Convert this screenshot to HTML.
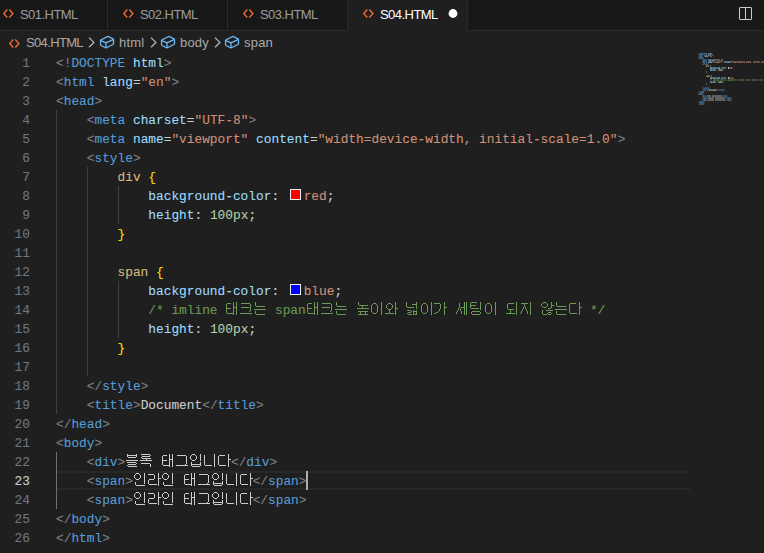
<!DOCTYPE html><html><head><meta charset="utf-8"><style>
*{margin:0;padding:0;box-sizing:border-box}
html,body{width:764px;height:553px;overflow:hidden;background:#1f1f1f}
body{position:relative;font-family:"Liberation Sans",sans-serif}
.tabs{position:absolute;left:0;top:0;width:764px;height:31px;background:#181818;border-bottom:1px solid #2b2b2b}
.tab{position:absolute;top:0;height:30px;width:120px;border-right:1px solid #2b2b2b;color:#9d9d9d;font-size:13px;letter-spacing:-0.55px}
.tab.act{background:#1f1f1f;color:#fff;height:31px}
.tab span{position:absolute;left:32px;top:7px;line-height:16px;white-space:pre}
.tab svg{position:absolute;left:14px;top:7px}
.bc{position:absolute;left:0;top:31px;height:22px;width:764px;color:#a9a9a9;font-size:13px;letter-spacing:-0.4px}
.bc span{position:absolute;top:4px;line-height:16px;white-space:pre}
.bc svg{position:absolute;top:3px}
.ln{position:absolute;left:0;width:30px;padding-top:1px;text-align:right;font-family:"Liberation Mono",monospace;font-size:12.825px;line-height:19px;color:#6e7681;height:19px;-webkit-text-stroke:0.1px currentColor}
.l{position:absolute;left:56px;height:19px;width:640px;font-family:"Liberation Mono",monospace;font-size:12.825px;line-height:19px;white-space:pre;-webkit-text-stroke:0.1px currentColor}
.l span{position:absolute;top:1px}
.l svg.k{position:absolute;top:0}
.g{position:absolute;width:1px;background:#404040}
</style></head><body>
<div class="tabs">
<div class="tab" style="left:-12px">
<svg style="left:15px;top:8.8px" width="14" height="12" viewBox="0 0 14 12"><path d="M4.3 0.6 L0.7 4.55 L4.3 8.5 M6.3 0.6 L9.9 4.55 L6.3 8.5" fill="none" stroke="#e86a2e" stroke-width="1.45"/></svg>
<span style="left:32px">S01.HTML</span>
</div>
<div class="tab" style="left:108px">
<svg style="left:15px;top:8.8px" width="14" height="12" viewBox="0 0 14 12"><path d="M4.3 0.6 L0.7 4.55 L4.3 8.5 M6.3 0.6 L9.9 4.55 L6.3 8.5" fill="none" stroke="#e86a2e" stroke-width="1.45"/></svg>
<span style="left:32px">S02.HTML</span>
</div>
<div class="tab" style="left:228px">
<svg style="left:15px;top:8.8px" width="14" height="12" viewBox="0 0 14 12"><path d="M4.3 0.6 L0.7 4.55 L4.3 8.5 M6.3 0.6 L9.9 4.55 L6.3 8.5" fill="none" stroke="#e86a2e" stroke-width="1.45"/></svg>
<span style="left:32px">S03.HTML</span>
</div>
<div class="tab act" style="left:348px">
<svg style="left:15px;top:8.8px" width="14" height="12" viewBox="0 0 14 12"><path d="M4.3 0.6 L0.7 4.55 L4.3 8.5 M6.3 0.6 L9.9 4.55 L6.3 8.5" fill="none" stroke="#e86a2e" stroke-width="1.45"/></svg>
<span style="left:32px">S04.HTML</span>
<svg style="left:100px;top:8px" width="12" height="12" viewBox="0 0 12 12"><circle cx="5" cy="5.5" r="4.4" fill="#ffffff"/></svg>
</div>
<svg style="position:absolute;left:737px;top:6px" width="16" height="16" viewBox="0 0 16 16"><path fill="#cccccc" d="M14 1H3L2 2v11l1 1h11l1-1V2l-1-1zM8 13H3V2h5v11zm6 0H9V2h5v11z"/></svg>
</div>
<div class="bc">
<svg style="left:9px;top:7.6px" width="14" height="12" viewBox="0 0 14 12"><path d="M4.3 0.6 L0.7 4.55 L4.3 8.5 M6.3 0.6 L9.9 4.55 L6.3 8.5" fill="none" stroke="#e86a2e" stroke-width="1.45"/></svg>
<span style="left:26px;letter-spacing:-0.65px">S04.HTML</span>
<svg style="left:83.2px;top:2.75px" width="16" height="16" viewBox="0 0 16 16"><path fill="none" stroke="#b8b8b8" stroke-width="1.25" d="M6 3.6 L10.9 8.4 L6 13.2"/></svg>
<svg style="left:99.3px;top:3.3px" width="16" height="16" viewBox="0 0 16 16"><path fill="#75beff" stroke="#75beff" stroke-width="0.25" d="M14.45 4.5l-5-2.5h-.9l-7 3.5-.55.89v4.5l.55.9 5 2.5h.9l7-3.5.55-.9v-4.5l-.55-.89zm-8 8.64l-4.5-2.25V7.17l4.5 2v3.97zm.5-4.8L2.29 6.23l6.66-3.34 4.67 2.34-6.67 3.11zm7 1.55l-6.5 3.25V9.21l6.5-3v3.68z"/></svg>
<span style="left:119px;letter-spacing:0.2px;font-size:13px;top:4px">html</span>
<svg style="left:144.5px;top:2.75px" width="16" height="16" viewBox="0 0 16 16"><path fill="none" stroke="#b8b8b8" stroke-width="1.25" d="M6 3.6 L10.9 8.4 L6 13.2"/></svg>
<svg style="left:160px;top:3.3px" width="16" height="16" viewBox="0 0 16 16"><path fill="#75beff" stroke="#75beff" stroke-width="0.25" d="M14.45 4.5l-5-2.5h-.9l-7 3.5-.55.89v4.5l.55.9 5 2.5h.9l7-3.5.55-.9v-4.5l-.55-.89zm-8 8.64l-4.5-2.25V7.17l4.5 2v3.97zm.5-4.8L2.29 6.23l6.66-3.34 4.67 2.34-6.67 3.11zm7 1.55l-6.5 3.25V9.21l6.5-3v3.68z"/></svg>
<span style="left:180px;letter-spacing:0.2px;font-size:13px;top:4px">body</span>
<svg style="left:209px;top:2.75px" width="16" height="16" viewBox="0 0 16 16"><path fill="none" stroke="#b8b8b8" stroke-width="1.25" d="M6 3.6 L10.9 8.4 L6 13.2"/></svg>
<svg style="left:224.3px;top:3.3px" width="16" height="16" viewBox="0 0 16 16"><path fill="#75beff" stroke="#75beff" stroke-width="0.25" d="M14.45 4.5l-5-2.5h-.9l-7 3.5-.55.89v4.5l.55.9 5 2.5h.9l7-3.5.55-.9v-4.5l-.55-.89zm-8 8.64l-4.5-2.25V7.17l4.5 2v3.97zm.5-4.8L2.29 6.23l6.66-3.34 4.67 2.34-6.67 3.11zm7 1.55l-6.5 3.25V9.21l6.5-3v3.68z"/></svg>
<span style="left:244px;letter-spacing:0.2px;font-size:13px;top:4px">span</span>
</div>
<div class="g" style="left:56px;top:110px;height:304px;background:#404040"></div>
<div class="g" style="left:87px;top:167px;height:209px;background:#404040"></div>
<div class="g" style="left:118px;top:186px;height:38px;background:#404040"></div>
<div class="g" style="left:118px;top:281px;height:57px;background:#404040"></div>
<div class="g" style="left:56px;top:452px;height:57px;background:#707070"></div>
<div style="position:absolute;left:57px;top:471px;width:633px;height:19px;border-top:2px solid #282828;border-bottom:2px solid #282828"></div>
<div class="ln" style="top:53px;color:#6e7681">1</div>
<div class="l" style="top:53px"><span style="left:0.000px;color:#808080">&lt;!</span><span style="left:15.390px;color:#569cd6">DOCTYPE</span><span style="left:76.950px;color:#9cdcfe">html</span><span style="left:107.730px;color:#808080">&gt;</span></div>
<div class="ln" style="top:72px;color:#6e7681">2</div>
<div class="l" style="top:72px"><span style="left:0.000px;color:#808080">&lt;</span><span style="left:7.695px;color:#569cd6">html</span><span style="left:46.170px;color:#9cdcfe">lang</span><span style="left:76.950px;color:#cccccc">=</span><span style="left:84.645px;color:#ce9178">&quot;en&quot;</span><span style="left:115.425px;color:#808080">&gt;</span></div>
<div class="ln" style="top:91px;color:#6e7681">3</div>
<div class="l" style="top:91px"><span style="left:0.000px;color:#808080">&lt;</span><span style="left:7.695px;color:#569cd6">head</span><span style="left:38.475px;color:#808080">&gt;</span></div>
<div class="ln" style="top:110px;color:#6e7681">4</div>
<div class="l" style="top:110px"><span style="left:30.780px;color:#808080">&lt;</span><span style="left:38.475px;color:#569cd6">meta</span><span style="left:76.950px;color:#9cdcfe">charset</span><span style="left:130.815px;color:#cccccc">=</span><span style="left:138.510px;color:#ce9178">&quot;UTF-8&quot;</span><span style="left:192.375px;color:#808080">&gt;</span></div>
<div class="ln" style="top:129px;color:#6e7681">5</div>
<div class="l" style="top:129px"><span style="left:30.780px;color:#808080">&lt;</span><span style="left:38.475px;color:#569cd6">meta</span><span style="left:76.950px;color:#9cdcfe">name</span><span style="left:107.730px;color:#cccccc">=</span><span style="left:115.425px;color:#ce9178">&quot;viewport&quot;</span><span style="left:200.070px;color:#9cdcfe">content</span><span style="left:253.935px;color:#cccccc">=</span><span style="left:261.630px;color:#ce9178">&quot;width=device-width, initial-scale=1.0&quot;</span><span style="left:561.735px;color:#808080">&gt;</span></div>
<div class="ln" style="top:148px;color:#6e7681">6</div>
<div class="l" style="top:148px"><span style="left:30.780px;color:#808080">&lt;</span><span style="left:38.475px;color:#569cd6">style</span><span style="left:76.950px;color:#808080">&gt;</span></div>
<div class="ln" style="top:167px;color:#6e7681">7</div>
<div class="l" style="top:167px"><span style="left:61.560px;color:#d7ba7d">div</span><span style="left:92.340px;color:#ffd700">{</span></div>
<div class="ln" style="top:186px;color:#6e7681">8</div>
<div class="l" style="top:186px"><span style="left:92.340px;color:#9cdcfe">background-color</span><span style="left:215.460px;color:#cccccc">: </span><div style="position:absolute;left:233.65px;top:3px;width:11.2px;height:11.2px;border:1.4px solid #eeeeee;background:#ff0000"></div><span style="left:247.650px;color:#ce9178">red</span><span style="left:270.735px;color:#cccccc">;</span></div>
<div class="ln" style="top:205px;color:#6e7681">9</div>
<div class="l" style="top:205px"><span style="left:92.340px;color:#9cdcfe">height</span><span style="left:138.510px;color:#cccccc">: </span><span style="left:153.900px;color:#b5cea8">100px</span><span style="left:192.375px;color:#cccccc">;</span></div>
<div class="ln" style="top:224px;color:#6e7681">10</div>
<div class="l" style="top:224px"><span style="left:61.560px;color:#ffd700">}</span></div>
<div class="ln" style="top:243px;color:#6e7681">11</div>
<div class="l" style="top:243px"></div>
<div class="ln" style="top:262px;color:#6e7681">12</div>
<div class="l" style="top:262px"><span style="left:61.560px;color:#d7ba7d">span</span><span style="left:100.035px;color:#ffd700">{</span></div>
<div class="ln" style="top:281px;color:#6e7681">13</div>
<div class="l" style="top:281px"><span style="left:92.340px;color:#9cdcfe">background-color</span><span style="left:215.460px;color:#cccccc">: </span><div style="position:absolute;left:233.65px;top:3px;width:11.2px;height:11.2px;border:1.4px solid #eeeeee;background:#0000ff"></div><span style="left:247.650px;color:#ce9178">blue</span><span style="left:278.430px;color:#cccccc">;</span></div>
<div class="ln" style="top:300px;color:#6e7681">14</div>
<div class="l" style="top:300px"><span style="left:92.340px;color:#6a9955">/* imline </span><span style="left:211.290px;color:#6a9955"> span</span><span style="left:526.240px;color:#6a9955"> */</span></div>
<div class="ln" style="top:319px;color:#6e7681">15</div>
<div class="l" style="top:319px"><span style="left:92.340px;color:#9cdcfe">height</span><span style="left:138.510px;color:#cccccc">: </span><span style="left:153.900px;color:#b5cea8">100px</span><span style="left:192.375px;color:#cccccc">;</span></div>
<div class="ln" style="top:338px;color:#6e7681">16</div>
<div class="l" style="top:338px"><span style="left:61.560px;color:#ffd700">}</span></div>
<div class="ln" style="top:357px;color:#6e7681">17</div>
<div class="l" style="top:357px"></div>
<div class="ln" style="top:376px;color:#6e7681">18</div>
<div class="l" style="top:376px"><span style="left:30.780px;color:#808080">&lt;/</span><span style="left:46.170px;color:#569cd6">style</span><span style="left:84.645px;color:#808080">&gt;</span></div>
<div class="ln" style="top:395px;color:#6e7681">19</div>
<div class="l" style="top:395px"><span style="left:30.780px;color:#808080">&lt;</span><span style="left:38.475px;color:#569cd6">title</span><span style="left:76.950px;color:#808080">&gt;</span><span style="left:84.645px;color:#cccccc">Document</span><span style="left:146.205px;color:#808080">&lt;/</span><span style="left:161.595px;color:#569cd6">title</span><span style="left:200.070px;color:#808080">&gt;</span></div>
<div class="ln" style="top:414px;color:#6e7681">20</div>
<div class="l" style="top:414px"><span style="left:0.000px;color:#808080">&lt;/</span><span style="left:15.390px;color:#569cd6">head</span><span style="left:46.170px;color:#808080">&gt;</span></div>
<div class="ln" style="top:433px;color:#6e7681">21</div>
<div class="l" style="top:433px"><span style="left:0.000px;color:#808080">&lt;</span><span style="left:7.695px;color:#569cd6">body</span><span style="left:38.475px;color:#808080">&gt;</span></div>
<div class="ln" style="top:452px;color:#6e7681">22</div>
<div class="l" style="top:452px"><span style="left:30.780px;color:#808080">&lt;</span><span style="left:38.475px;color:#569cd6">div</span><span style="left:61.560px;color:#808080">&gt;</span><span style="left:174.950px;color:#808080">&lt;/</span><span style="left:190.340px;color:#569cd6">div</span><span style="left:213.425px;color:#808080">&gt;</span></div>
<div class="ln" style="top:471px;color:#cccccc">23</div>
<div class="l" style="top:471px"><span style="left:30.780px;color:#808080">&lt;</span><span style="left:38.475px;color:#569cd6">span</span><span style="left:69.255px;color:#808080">&gt;</span><span style="left:196.645px;color:#808080">&lt;/</span><span style="left:212.035px;color:#569cd6">span</span><span style="left:242.815px;color:#808080">&gt;</span></div>
<div class="ln" style="top:490px;color:#6e7681">24</div>
<div class="l" style="top:490px"><span style="left:30.780px;color:#808080">&lt;</span><span style="left:38.475px;color:#569cd6">span</span><span style="left:69.255px;color:#808080">&gt;</span><span style="left:196.645px;color:#808080">&lt;/</span><span style="left:212.035px;color:#569cd6">span</span><span style="left:242.815px;color:#808080">&gt;</span></div>
<div class="ln" style="top:509px;color:#6e7681">25</div>
<div class="l" style="top:509px"><span style="left:0.000px;color:#808080">&lt;/</span><span style="left:15.390px;color:#569cd6">body</span><span style="left:46.170px;color:#808080">&gt;</span></div>
<div class="ln" style="top:528px;color:#6e7681">26</div>
<div class="l" style="top:528px"><span style="left:0.000px;color:#808080">&lt;/</span><span style="left:15.390px;color:#569cd6">html</span><span style="left:46.170px;color:#808080">&gt;</span></div>
<svg style="position:absolute;left:0;top:0" width="764" height="553"><defs><g id="k19" fill="currentColor"><rect x="7" y="-12" width="1" height="1" fill-opacity="1.00"/><rect x="10" y="-12" width="1" height="1" fill-opacity="1.00"/><rect x="1" y="-11" width="1" height="1" fill-opacity="1.00"/><rect x="2" y="-11" width="1" height="1" fill-opacity="1.00"/><rect x="3" y="-11" width="1" height="1" fill-opacity="1.00"/><rect x="4" y="-11" width="1" height="1" fill-opacity="1.00"/><rect x="7" y="-11" width="1" height="1" fill-opacity="1.00"/><rect x="10" y="-11" width="1" height="1" fill-opacity="1.00"/><rect x="0" y="-10" width="1" height="1" fill-opacity="1.00"/><rect x="7" y="-10" width="1" height="1" fill-opacity="1.00"/><rect x="10" y="-10" width="1" height="1" fill-opacity="1.00"/><rect x="0" y="-9" width="1" height="1" fill-opacity="1.00"/><rect x="7" y="-9" width="1" height="1" fill-opacity="1.00"/><rect x="10" y="-9" width="1" height="1" fill-opacity="1.00"/><rect x="0" y="-8" width="1" height="1" fill-opacity="1.00"/><rect x="7" y="-8" width="1" height="1" fill-opacity="1.00"/><rect x="10" y="-8" width="1" height="1" fill-opacity="1.00"/><rect x="0" y="-7" width="1" height="1" fill-opacity="1.00"/><rect x="7" y="-7" width="1" height="1" fill-opacity="1.00"/><rect x="8" y="-7" width="1" height="1" fill-opacity="1.00"/><rect x="9" y="-7" width="1" height="1" fill-opacity="1.00"/><rect x="10" y="-7" width="1" height="1" fill-opacity="1.00"/><rect x="0" y="-6" width="1" height="1" fill-opacity="1.00"/><rect x="1" y="-6" width="1" height="1" fill-opacity="1.00"/><rect x="2" y="-6" width="1" height="1" fill-opacity="1.00"/><rect x="3" y="-6" width="1" height="1" fill-opacity="1.00"/><rect x="4" y="-6" width="1" height="1" fill-opacity="1.00"/><rect x="7" y="-6" width="1" height="1" fill-opacity="1.00"/><rect x="10" y="-6" width="1" height="1" fill-opacity="1.00"/><rect x="0" y="-5" width="1" height="1" fill-opacity="1.00"/><rect x="7" y="-5" width="1" height="1" fill-opacity="1.00"/><rect x="10" y="-5" width="1" height="1" fill-opacity="1.00"/><rect x="0" y="-4" width="1" height="1" fill-opacity="1.00"/><rect x="7" y="-4" width="1" height="1" fill-opacity="1.00"/><rect x="10" y="-4" width="1" height="1" fill-opacity="1.00"/><rect x="0" y="-3" width="1" height="1" fill-opacity="1.00"/><rect x="7" y="-3" width="1" height="1" fill-opacity="1.00"/><rect x="10" y="-3" width="1" height="1" fill-opacity="1.00"/><rect x="0" y="-2" width="1" height="1" fill-opacity="1.00"/><rect x="7" y="-2" width="1" height="1" fill-opacity="1.00"/><rect x="10" y="-2" width="1" height="1" fill-opacity="1.00"/><rect x="1" y="-1" width="1" height="1" fill-opacity="1.00"/><rect x="2" y="-1" width="1" height="1" fill-opacity="1.00"/><rect x="3" y="-1" width="1" height="1" fill-opacity="1.00"/><rect x="4" y="-1" width="1" height="1" fill-opacity="1.00"/><rect x="5" y="-1" width="1" height="1" fill-opacity="1.00"/><rect x="6" y="-1" width="1" height="1" fill-opacity="1.00"/><rect x="7" y="-1" width="1" height="1" fill-opacity="1.00"/><rect x="10" y="-1" width="1" height="1" fill-opacity="1.00"/><rect x="7" y="0" width="1" height="1" fill-opacity="1.00"/><rect x="10" y="0" width="1" height="1" fill-opacity="1.00"/></g><g id="k18" fill="currentColor"><rect x="1" y="-11" width="1" height="1" fill-opacity="1.00"/><rect x="2" y="-11" width="1" height="1" fill-opacity="1.00"/><rect x="3" y="-11" width="1" height="1" fill-opacity="1.00"/><rect x="4" y="-11" width="1" height="1" fill-opacity="1.00"/><rect x="5" y="-11" width="1" height="1" fill-opacity="1.00"/><rect x="6" y="-11" width="1" height="1" fill-opacity="1.00"/><rect x="7" y="-11" width="1" height="1" fill-opacity="1.00"/><rect x="8" y="-11" width="1" height="1" fill-opacity="1.00"/><rect x="9" y="-11" width="1" height="1" fill-opacity="1.00"/><rect x="10" y="-10" width="1" height="1" fill-opacity="1.00"/><rect x="10" y="-9" width="1" height="1" fill-opacity="1.00"/><rect x="10" y="-8" width="1" height="1" fill-opacity="1.00"/><rect x="1" y="-7" width="1" height="1" fill-opacity="1.00"/><rect x="2" y="-7" width="1" height="1" fill-opacity="1.00"/><rect x="3" y="-7" width="1" height="1" fill-opacity="1.00"/><rect x="4" y="-7" width="1" height="1" fill-opacity="1.00"/><rect x="5" y="-7" width="1" height="1" fill-opacity="1.00"/><rect x="6" y="-7" width="1" height="1" fill-opacity="1.00"/><rect x="7" y="-7" width="1" height="1" fill-opacity="1.00"/><rect x="8" y="-7" width="1" height="1" fill-opacity="1.00"/><rect x="10" y="-7" width="1" height="1" fill-opacity="1.00"/><rect x="10" y="-6" width="1" height="1" fill-opacity="1.00"/><rect x="10" y="-5" width="1" height="1" fill-opacity="1.00"/><rect x="10" y="-4" width="1" height="1" fill-opacity="1.00"/><rect x="9" y="-3" width="1" height="1" fill-opacity="1.00"/><rect x="0" y="-1" width="1" height="1" fill-opacity="1.00"/><rect x="1" y="-1" width="1" height="1" fill-opacity="1.00"/><rect x="2" y="-1" width="1" height="1" fill-opacity="1.00"/><rect x="3" y="-1" width="1" height="1" fill-opacity="1.00"/><rect x="4" y="-1" width="1" height="1" fill-opacity="1.00"/><rect x="5" y="-1" width="1" height="1" fill-opacity="1.00"/><rect x="6" y="-1" width="1" height="1" fill-opacity="1.00"/><rect x="7" y="-1" width="1" height="1" fill-opacity="1.00"/><rect x="8" y="-1" width="1" height="1" fill-opacity="1.00"/><rect x="9" y="-1" width="1" height="1" fill-opacity="1.00"/><rect x="10" y="-1" width="1" height="1" fill-opacity="1.00"/><rect x="11" y="-1" width="1" height="1" fill-opacity="1.00"/></g><g id="k4" fill="currentColor"><rect x="1" y="-12" width="1" height="1" fill-opacity="1.00"/><rect x="1" y="-11" width="1" height="1" fill-opacity="1.00"/><rect x="1" y="-10" width="1" height="1" fill-opacity="1.00"/><rect x="1" y="-9" width="1" height="1" fill-opacity="1.00"/><rect x="2" y="-8" width="1" height="1" fill-opacity="1.00"/><rect x="3" y="-8" width="1" height="1" fill-opacity="1.00"/><rect x="4" y="-8" width="1" height="1" fill-opacity="1.00"/><rect x="5" y="-8" width="1" height="1" fill-opacity="1.00"/><rect x="6" y="-8" width="1" height="1" fill-opacity="1.00"/><rect x="7" y="-8" width="1" height="1" fill-opacity="1.00"/><rect x="8" y="-8" width="1" height="1" fill-opacity="1.00"/><rect x="9" y="-8" width="1" height="1" fill-opacity="1.00"/><rect x="10" y="-8" width="1" height="1" fill-opacity="1.00"/><rect x="0" y="-5" width="1" height="1" fill-opacity="1.00"/><rect x="1" y="-5" width="1" height="1" fill-opacity="1.00"/><rect x="2" y="-5" width="1" height="1" fill-opacity="1.00"/><rect x="3" y="-5" width="1" height="1" fill-opacity="1.00"/><rect x="4" y="-5" width="1" height="1" fill-opacity="1.00"/><rect x="5" y="-5" width="1" height="1" fill-opacity="1.00"/><rect x="6" y="-5" width="1" height="1" fill-opacity="1.00"/><rect x="7" y="-5" width="1" height="1" fill-opacity="1.00"/><rect x="8" y="-5" width="1" height="1" fill-opacity="1.00"/><rect x="9" y="-5" width="1" height="1" fill-opacity="1.00"/><rect x="10" y="-5" width="1" height="1" fill-opacity="1.00"/><rect x="11" y="-5" width="1" height="1" fill-opacity="1.00"/><rect x="1" y="-3" width="1" height="1" fill-opacity="1.00"/><rect x="1" y="-2" width="1" height="1" fill-opacity="1.00"/><rect x="1" y="-1" width="1" height="1" fill-opacity="1.00"/><rect x="2" y="0" width="1" height="1" fill-opacity="1.00"/><rect x="3" y="0" width="1" height="1" fill-opacity="1.00"/><rect x="4" y="0" width="1" height="1" fill-opacity="1.00"/><rect x="5" y="0" width="1" height="1" fill-opacity="1.00"/><rect x="6" y="0" width="1" height="1" fill-opacity="1.00"/><rect x="7" y="0" width="1" height="1" fill-opacity="1.00"/><rect x="8" y="0" width="1" height="1" fill-opacity="1.00"/><rect x="9" y="0" width="1" height="1" fill-opacity="1.00"/><rect x="10" y="0" width="1" height="1" fill-opacity="1.00"/></g><g id="k3" fill="currentColor"><rect x="2" y="-12" width="1" height="1" fill-opacity="1.00"/><rect x="2" y="-11" width="1" height="1" fill-opacity="1.00"/><rect x="2" y="-10" width="1" height="1" fill-opacity="1.00"/><rect x="3" y="-9" width="1" height="1" fill-opacity="1.00"/><rect x="4" y="-9" width="1" height="1" fill-opacity="1.00"/><rect x="5" y="-9" width="1" height="1" fill-opacity="1.00"/><rect x="6" y="-9" width="1" height="1" fill-opacity="1.00"/><rect x="7" y="-9" width="1" height="1" fill-opacity="1.00"/><rect x="8" y="-9" width="1" height="1" fill-opacity="1.00"/><rect x="9" y="-9" width="1" height="1" fill-opacity="1.00"/><rect x="10" y="-9" width="1" height="1" fill-opacity="1.00"/><rect x="11" y="-9" width="1" height="1" fill-opacity="1.00"/><rect x="6" y="-8" width="1" height="1" fill-opacity="1.00"/><rect x="6" y="-7" width="1" height="1" fill-opacity="1.00"/><rect x="1" y="-6" width="1" height="1" fill-opacity="1.00"/><rect x="2" y="-6" width="1" height="1" fill-opacity="1.00"/><rect x="3" y="-6" width="1" height="1" fill-opacity="1.00"/><rect x="4" y="-6" width="1" height="1" fill-opacity="1.00"/><rect x="5" y="-6" width="1" height="1" fill-opacity="1.00"/><rect x="6" y="-6" width="1" height="1" fill-opacity="1.00"/><rect x="7" y="-6" width="1" height="1" fill-opacity="1.00"/><rect x="8" y="-6" width="1" height="1" fill-opacity="1.00"/><rect x="9" y="-6" width="1" height="1" fill-opacity="1.00"/><rect x="10" y="-6" width="1" height="1" fill-opacity="1.00"/><rect x="11" y="-6" width="1" height="1" fill-opacity="1.00"/><rect x="12" y="-6" width="1" height="1" fill-opacity="1.00"/><rect x="2" y="-3" width="1" height="1" fill-opacity="1.00"/><rect x="3" y="-3" width="1" height="1" fill-opacity="1.00"/><rect x="4" y="-3" width="1" height="1" fill-opacity="1.00"/><rect x="5" y="-3" width="1" height="1" fill-opacity="1.00"/><rect x="6" y="-3" width="1" height="1" fill-opacity="1.00"/><rect x="7" y="-3" width="1" height="1" fill-opacity="1.00"/><rect x="8" y="-3" width="1" height="1" fill-opacity="1.00"/><rect x="9" y="-3" width="1" height="1" fill-opacity="1.00"/><rect x="10" y="-3" width="1" height="1" fill-opacity="1.00"/><rect x="11" y="-3" width="1" height="1" fill-opacity="1.00"/><rect x="4" y="-2" width="1" height="1" fill-opacity="1.00"/><rect x="9" y="-2" width="1" height="1" fill-opacity="1.00"/><rect x="4" y="-1" width="1" height="1" fill-opacity="1.00"/><rect x="9" y="-1" width="1" height="1" fill-opacity="1.00"/><rect x="2" y="0" width="1" height="1" fill-opacity="1.00"/><rect x="3" y="0" width="1" height="1" fill-opacity="1.00"/><rect x="4" y="0" width="1" height="1" fill-opacity="1.00"/><rect x="5" y="0" width="1" height="1" fill-opacity="1.00"/><rect x="6" y="0" width="1" height="1" fill-opacity="1.00"/><rect x="7" y="0" width="1" height="1" fill-opacity="1.00"/><rect x="8" y="0" width="1" height="1" fill-opacity="1.00"/><rect x="9" y="0" width="1" height="1" fill-opacity="1.00"/><rect x="10" y="0" width="1" height="1" fill-opacity="1.00"/><rect x="11" y="0" width="1" height="1" fill-opacity="1.00"/></g><g id="k14" fill="currentColor"><rect x="11" y="-12" width="1" height="1" fill-opacity="1.00"/><rect x="3" y="-11" width="1" height="1" fill-opacity="1.00"/><rect x="4" y="-11" width="1" height="1" fill-opacity="1.00"/><rect x="5" y="-11" width="1" height="1" fill-opacity="1.00"/><rect x="11" y="-11" width="1" height="1" fill-opacity="1.00"/><rect x="2" y="-10" width="1" height="1" fill-opacity="1.00"/><rect x="6" y="-10" width="1" height="1" fill-opacity="1.00"/><rect x="11" y="-10" width="1" height="1" fill-opacity="1.00"/><rect x="1" y="-9" width="1" height="1" fill-opacity="1.00"/><rect x="7" y="-9" width="1" height="1" fill-opacity="1.00"/><rect x="11" y="-9" width="1" height="1" fill-opacity="1.00"/><rect x="1" y="-8" width="1" height="1" fill-opacity="1.00"/><rect x="7" y="-8" width="1" height="1" fill-opacity="1.00"/><rect x="11" y="-8" width="1" height="1" fill-opacity="1.00"/><rect x="1" y="-7" width="1" height="1" fill-opacity="1.00"/><rect x="7" y="-7" width="1" height="1" fill-opacity="1.00"/><rect x="11" y="-7" width="1" height="1" fill-opacity="1.00"/><rect x="1" y="-6" width="1" height="1" fill-opacity="1.00"/><rect x="7" y="-6" width="1" height="1" fill-opacity="1.00"/><rect x="11" y="-6" width="1" height="1" fill-opacity="1.00"/><rect x="1" y="-5" width="1" height="1" fill-opacity="1.00"/><rect x="7" y="-5" width="1" height="1" fill-opacity="1.00"/><rect x="11" y="-5" width="1" height="1" fill-opacity="1.00"/><rect x="1" y="-4" width="1" height="1" fill-opacity="1.00"/><rect x="7" y="-4" width="1" height="1" fill-opacity="1.00"/><rect x="11" y="-4" width="1" height="1" fill-opacity="1.00"/><rect x="1" y="-3" width="1" height="1" fill-opacity="1.00"/><rect x="7" y="-3" width="1" height="1" fill-opacity="1.00"/><rect x="11" y="-3" width="1" height="1" fill-opacity="1.00"/><rect x="2" y="-2" width="1" height="1" fill-opacity="1.00"/><rect x="6" y="-2" width="1" height="1" fill-opacity="1.00"/><rect x="11" y="-2" width="1" height="1" fill-opacity="1.00"/><rect x="3" y="-1" width="1" height="1" fill-opacity="1.00"/><rect x="4" y="-1" width="1" height="1" fill-opacity="1.00"/><rect x="5" y="-1" width="1" height="1" fill-opacity="1.00"/><rect x="11" y="-1" width="1" height="1" fill-opacity="1.00"/><rect x="11" y="0" width="1" height="1" fill-opacity="1.00"/></g><g id="k13" fill="currentColor"><rect x="11" y="-12" width="1" height="1" fill-opacity="1.00"/><rect x="4" y="-11" width="1" height="1" fill-opacity="1.00"/><rect x="5" y="-11" width="1" height="1" fill-opacity="1.00"/><rect x="6" y="-11" width="1" height="1" fill-opacity="1.00"/><rect x="11" y="-11" width="1" height="1" fill-opacity="1.00"/><rect x="3" y="-10" width="1" height="1" fill-opacity="1.00"/><rect x="7" y="-10" width="1" height="1" fill-opacity="1.00"/><rect x="11" y="-10" width="1" height="1" fill-opacity="1.00"/><rect x="2" y="-9" width="1" height="1" fill-opacity="1.00"/><rect x="8" y="-9" width="1" height="1" fill-opacity="1.00"/><rect x="11" y="-9" width="1" height="1" fill-opacity="1.00"/><rect x="2" y="-8" width="1" height="1" fill-opacity="1.00"/><rect x="8" y="-8" width="1" height="1" fill-opacity="1.00"/><rect x="11" y="-8" width="1" height="1" fill-opacity="1.00"/><rect x="2" y="-7" width="1" height="1" fill-opacity="1.00"/><rect x="8" y="-7" width="1" height="1" fill-opacity="1.00"/><rect x="11" y="-7" width="1" height="1" fill-opacity="1.00"/><rect x="3" y="-6" width="1" height="1" fill-opacity="1.00"/><rect x="7" y="-6" width="1" height="1" fill-opacity="1.00"/><rect x="11" y="-6" width="1" height="1" fill-opacity="1.00"/><rect x="12" y="-6" width="1" height="1" fill-opacity="1.00"/><rect x="13" y="-6" width="1" height="1" fill-opacity="1.00"/><rect x="4" y="-5" width="1" height="1" fill-opacity="1.00"/><rect x="5" y="-5" width="1" height="1" fill-opacity="1.00"/><rect x="6" y="-5" width="1" height="1" fill-opacity="1.00"/><rect x="11" y="-5" width="1" height="1" fill-opacity="1.00"/><rect x="5" y="-4" width="1" height="1" fill-opacity="1.00"/><rect x="11" y="-4" width="1" height="1" fill-opacity="1.00"/><rect x="5" y="-3" width="1" height="1" fill-opacity="1.00"/><rect x="11" y="-3" width="1" height="1" fill-opacity="1.00"/><rect x="5" y="-2" width="1" height="1" fill-opacity="1.00"/><rect x="11" y="-2" width="1" height="1" fill-opacity="1.00"/><rect x="1" y="-1" width="1" height="1" fill-opacity="1.00"/><rect x="2" y="-1" width="1" height="1" fill-opacity="1.00"/><rect x="3" y="-1" width="1" height="1" fill-opacity="1.00"/><rect x="4" y="-1" width="1" height="1" fill-opacity="1.00"/><rect x="5" y="-1" width="1" height="1" fill-opacity="1.00"/><rect x="6" y="-1" width="1" height="1" fill-opacity="1.00"/><rect x="7" y="-1" width="1" height="1" fill-opacity="1.00"/><rect x="8" y="-1" width="1" height="1" fill-opacity="1.00"/><rect x="9" y="-1" width="1" height="1" fill-opacity="1.00"/><rect x="11" y="-1" width="1" height="1" fill-opacity="1.00"/><rect x="11" y="0" width="1" height="1" fill-opacity="1.00"/></g><g id="k2" fill="currentColor"><rect x="0" y="-12" width="1" height="1" fill-opacity="1.00"/><rect x="10" y="-12" width="1" height="1" fill-opacity="1.00"/><rect x="0" y="-11" width="1" height="1" fill-opacity="1.00"/><rect x="10" y="-11" width="1" height="1" fill-opacity="1.00"/><rect x="0" y="-10" width="1" height="1" fill-opacity="1.00"/><rect x="6" y="-10" width="1" height="1" fill-opacity="1.00"/><rect x="7" y="-10" width="1" height="1" fill-opacity="1.00"/><rect x="8" y="-10" width="1" height="1" fill-opacity="1.00"/><rect x="9" y="-10" width="1" height="1" fill-opacity="1.00"/><rect x="10" y="-10" width="1" height="1" fill-opacity="1.00"/><rect x="0" y="-9" width="1" height="1" fill-opacity="1.00"/><rect x="10" y="-9" width="1" height="1" fill-opacity="1.00"/><rect x="0" y="-8" width="1" height="1" fill-opacity="1.00"/><rect x="10" y="-8" width="1" height="1" fill-opacity="1.00"/><rect x="1" y="-7" width="1" height="1" fill-opacity="1.00"/><rect x="2" y="-7" width="1" height="1" fill-opacity="1.00"/><rect x="3" y="-7" width="1" height="1" fill-opacity="1.00"/><rect x="4" y="-7" width="1" height="1" fill-opacity="1.00"/><rect x="5" y="-7" width="1" height="1" fill-opacity="1.00"/><rect x="6" y="-7" width="1" height="1" fill-opacity="1.00"/><rect x="7" y="-7" width="1" height="1" fill-opacity="1.00"/><rect x="10" y="-7" width="1" height="1" fill-opacity="1.00"/><rect x="10" y="-6" width="1" height="1" fill-opacity="1.00"/><rect x="1" y="-4" width="1" height="1" fill-opacity="1.00"/><rect x="2" y="-4" width="1" height="1" fill-opacity="1.00"/><rect x="3" y="-4" width="1" height="1" fill-opacity="1.00"/><rect x="4" y="-4" width="1" height="1" fill-opacity="1.00"/><rect x="7" y="-4" width="1" height="1" fill-opacity="1.00"/><rect x="10" y="-4" width="1" height="1" fill-opacity="1.00"/><rect x="5" y="-3" width="1" height="1" fill-opacity="1.00"/><rect x="7" y="-3" width="1" height="1" fill-opacity="1.00"/><rect x="8" y="-3" width="1" height="1" fill-opacity="1.00"/><rect x="9" y="-3" width="1" height="1" fill-opacity="1.00"/><rect x="10" y="-3" width="1" height="1" fill-opacity="1.00"/><rect x="2" y="-2" width="1" height="1" fill-opacity="1.00"/><rect x="3" y="-2" width="1" height="1" fill-opacity="1.00"/><rect x="4" y="-2" width="1" height="1" fill-opacity="1.00"/><rect x="7" y="-2" width="1" height="1" fill-opacity="1.00"/><rect x="10" y="-2" width="1" height="1" fill-opacity="1.00"/><rect x="1" y="-1" width="1" height="1" fill-opacity="1.00"/><rect x="7" y="-1" width="1" height="1" fill-opacity="1.00"/><rect x="10" y="-1" width="1" height="1" fill-opacity="1.00"/><rect x="2" y="0" width="1" height="1" fill-opacity="1.00"/><rect x="3" y="0" width="1" height="1" fill-opacity="1.00"/><rect x="4" y="0" width="1" height="1" fill-opacity="1.00"/><rect x="5" y="0" width="1" height="1" fill-opacity="1.00"/><rect x="7" y="0" width="1" height="1" fill-opacity="1.00"/><rect x="8" y="0" width="1" height="1" fill-opacity="1.00"/><rect x="9" y="0" width="1" height="1" fill-opacity="1.00"/><rect x="10" y="0" width="1" height="1" fill-opacity="1.00"/></g><g id="k0" fill="currentColor"><rect x="10" y="-12" width="1" height="1" fill-opacity="1.00"/><rect x="0" y="-11" width="1" height="1" fill-opacity="1.00"/><rect x="1" y="-11" width="1" height="1" fill-opacity="1.00"/><rect x="2" y="-11" width="1" height="1" fill-opacity="1.00"/><rect x="3" y="-11" width="1" height="1" fill-opacity="1.00"/><rect x="4" y="-11" width="1" height="1" fill-opacity="1.00"/><rect x="5" y="-11" width="1" height="1" fill-opacity="1.00"/><rect x="10" y="-11" width="1" height="1" fill-opacity="1.00"/><rect x="6" y="-10" width="1" height="1" fill-opacity="1.00"/><rect x="10" y="-10" width="1" height="1" fill-opacity="1.00"/><rect x="6" y="-9" width="1" height="1" fill-opacity="1.00"/><rect x="10" y="-9" width="1" height="1" fill-opacity="1.00"/><rect x="6" y="-8" width="1" height="1" fill-opacity="1.00"/><rect x="10" y="-8" width="1" height="1" fill-opacity="1.00"/><rect x="6" y="-7" width="1" height="1" fill-opacity="1.00"/><rect x="10" y="-7" width="1" height="1" fill-opacity="1.00"/><rect x="11" y="-7" width="1" height="1" fill-opacity="1.00"/><rect x="12" y="-7" width="1" height="1" fill-opacity="1.00"/><rect x="6" y="-6" width="1" height="1" fill-opacity="1.00"/><rect x="10" y="-6" width="1" height="1" fill-opacity="1.00"/><rect x="5" y="-5" width="1" height="1" fill-opacity="1.00"/><rect x="10" y="-5" width="1" height="1" fill-opacity="1.00"/><rect x="5" y="-4" width="1" height="1" fill-opacity="1.00"/><rect x="10" y="-4" width="1" height="1" fill-opacity="1.00"/><rect x="4" y="-3" width="1" height="1" fill-opacity="1.00"/><rect x="10" y="-3" width="1" height="1" fill-opacity="1.00"/><rect x="2" y="-2" width="1" height="1" fill-opacity="1.00"/><rect x="3" y="-2" width="1" height="1" fill-opacity="1.00"/><rect x="10" y="-2" width="1" height="1" fill-opacity="1.00"/><rect x="0" y="-1" width="1" height="1" fill-opacity="1.00"/><rect x="1" y="-1" width="1" height="1" fill-opacity="1.00"/><rect x="10" y="-1" width="1" height="1" fill-opacity="1.00"/><rect x="10" y="0" width="1" height="1" fill-opacity="1.00"/></g><g id="k11" fill="currentColor"><rect x="8" y="-12" width="1" height="1" fill-opacity="1.00"/><rect x="10" y="-12" width="1" height="1" fill-opacity="1.00"/><rect x="3" y="-11" width="1" height="1" fill-opacity="1.00"/><rect x="8" y="-11" width="1" height="1" fill-opacity="1.00"/><rect x="10" y="-11" width="1" height="1" fill-opacity="1.00"/><rect x="3" y="-10" width="1" height="1" fill-opacity="1.00"/><rect x="8" y="-10" width="1" height="1" fill-opacity="1.00"/><rect x="10" y="-10" width="1" height="1" fill-opacity="1.00"/><rect x="3" y="-9" width="1" height="1" fill-opacity="1.00"/><rect x="8" y="-9" width="1" height="1" fill-opacity="1.00"/><rect x="10" y="-9" width="1" height="1" fill-opacity="1.00"/><rect x="3" y="-8" width="1" height="1" fill-opacity="1.00"/><rect x="8" y="-8" width="1" height="1" fill-opacity="1.00"/><rect x="10" y="-8" width="1" height="1" fill-opacity="1.00"/><rect x="3" y="-7" width="1" height="1" fill-opacity="1.00"/><rect x="5" y="-7" width="1" height="1" fill-opacity="1.00"/><rect x="6" y="-7" width="1" height="1" fill-opacity="1.00"/><rect x="7" y="-7" width="1" height="1" fill-opacity="1.00"/><rect x="8" y="-7" width="1" height="1" fill-opacity="1.00"/><rect x="10" y="-7" width="1" height="1" fill-opacity="1.00"/><rect x="2" y="-6" width="1" height="1" fill-opacity="1.00"/><rect x="4" y="-6" width="1" height="1" fill-opacity="1.00"/><rect x="8" y="-6" width="1" height="1" fill-opacity="1.00"/><rect x="10" y="-6" width="1" height="1" fill-opacity="1.00"/><rect x="2" y="-5" width="1" height="1" fill-opacity="1.00"/><rect x="4" y="-5" width="1" height="1" fill-opacity="1.00"/><rect x="8" y="-5" width="1" height="1" fill-opacity="1.00"/><rect x="10" y="-5" width="1" height="1" fill-opacity="1.00"/><rect x="1" y="-4" width="1" height="1" fill-opacity="1.00"/><rect x="4" y="-4" width="1" height="1" fill-opacity="1.00"/><rect x="8" y="-4" width="1" height="1" fill-opacity="1.00"/><rect x="10" y="-4" width="1" height="1" fill-opacity="1.00"/><rect x="1" y="-3" width="1" height="1" fill-opacity="1.00"/><rect x="5" y="-3" width="1" height="1" fill-opacity="1.00"/><rect x="8" y="-3" width="1" height="1" fill-opacity="1.00"/><rect x="10" y="-3" width="1" height="1" fill-opacity="1.00"/><rect x="0" y="-2" width="1" height="1" fill-opacity="1.00"/><rect x="5" y="-2" width="1" height="1" fill-opacity="1.00"/><rect x="8" y="-2" width="1" height="1" fill-opacity="1.00"/><rect x="10" y="-2" width="1" height="1" fill-opacity="1.00"/><rect x="0" y="-1" width="1" height="1" fill-opacity="1.00"/><rect x="5" y="-1" width="1" height="1" fill-opacity="1.00"/><rect x="8" y="-1" width="1" height="1" fill-opacity="1.00"/><rect x="10" y="-1" width="1" height="1" fill-opacity="1.00"/><rect x="8" y="0" width="1" height="1" fill-opacity="1.00"/><rect x="10" y="0" width="1" height="1" fill-opacity="1.00"/></g><g id="k20" fill="currentColor"><rect x="1" y="-12" width="1" height="1" fill-opacity="1.00"/><rect x="2" y="-12" width="1" height="1" fill-opacity="1.00"/><rect x="3" y="-12" width="1" height="1" fill-opacity="1.00"/><rect x="4" y="-12" width="1" height="1" fill-opacity="1.00"/><rect x="5" y="-12" width="1" height="1" fill-opacity="1.00"/><rect x="6" y="-12" width="1" height="1" fill-opacity="1.00"/><rect x="10" y="-12" width="1" height="1" fill-opacity="1.00"/><rect x="0" y="-11" width="1" height="1" fill-opacity="1.00"/><rect x="10" y="-11" width="1" height="1" fill-opacity="1.00"/><rect x="0" y="-10" width="1" height="1" fill-opacity="1.00"/><rect x="10" y="-10" width="1" height="1" fill-opacity="1.00"/><rect x="0" y="-9" width="1" height="1" fill-opacity="1.00"/><rect x="1" y="-9" width="1" height="1" fill-opacity="1.00"/><rect x="2" y="-9" width="1" height="1" fill-opacity="1.00"/><rect x="3" y="-9" width="1" height="1" fill-opacity="1.00"/><rect x="4" y="-9" width="1" height="1" fill-opacity="1.00"/><rect x="5" y="-9" width="1" height="1" fill-opacity="1.00"/><rect x="10" y="-9" width="1" height="1" fill-opacity="1.00"/><rect x="0" y="-8" width="1" height="1" fill-opacity="1.00"/><rect x="10" y="-8" width="1" height="1" fill-opacity="1.00"/><rect x="0" y="-7" width="1" height="1" fill-opacity="1.00"/><rect x="10" y="-7" width="1" height="1" fill-opacity="1.00"/><rect x="1" y="-6" width="1" height="1" fill-opacity="1.00"/><rect x="2" y="-6" width="1" height="1" fill-opacity="1.00"/><rect x="3" y="-6" width="1" height="1" fill-opacity="1.00"/><rect x="4" y="-6" width="1" height="1" fill-opacity="1.00"/><rect x="5" y="-6" width="1" height="1" fill-opacity="1.00"/><rect x="6" y="-6" width="1" height="1" fill-opacity="1.00"/><rect x="7" y="-6" width="1" height="1" fill-opacity="1.00"/><rect x="8" y="-6" width="1" height="1" fill-opacity="1.00"/><rect x="10" y="-6" width="1" height="1" fill-opacity="1.00"/><rect x="10" y="-5" width="1" height="1" fill-opacity="1.00"/><rect x="2" y="-3" width="1" height="1" fill-opacity="1.00"/><rect x="3" y="-3" width="1" height="1" fill-opacity="1.00"/><rect x="4" y="-3" width="1" height="1" fill-opacity="1.00"/><rect x="5" y="-3" width="1" height="1" fill-opacity="1.00"/><rect x="6" y="-3" width="1" height="1" fill-opacity="1.00"/><rect x="7" y="-3" width="1" height="1" fill-opacity="1.00"/><rect x="8" y="-3" width="1" height="1" fill-opacity="1.00"/><rect x="9" y="-3" width="1" height="1" fill-opacity="1.00"/><rect x="1" y="-2" width="1" height="1" fill-opacity="1.00"/><rect x="10" y="-2" width="1" height="1" fill-opacity="1.00"/><rect x="1" y="-1" width="1" height="1" fill-opacity="1.00"/><rect x="10" y="-1" width="1" height="1" fill-opacity="1.00"/><rect x="2" y="0" width="1" height="1" fill-opacity="1.00"/><rect x="3" y="0" width="1" height="1" fill-opacity="1.00"/><rect x="4" y="0" width="1" height="1" fill-opacity="1.00"/><rect x="5" y="0" width="1" height="1" fill-opacity="1.00"/><rect x="6" y="0" width="1" height="1" fill-opacity="1.00"/><rect x="7" y="0" width="1" height="1" fill-opacity="1.00"/><rect x="8" y="0" width="1" height="1" fill-opacity="1.00"/><rect x="9" y="0" width="1" height="1" fill-opacity="1.00"/></g><g id="k7" fill="currentColor"><rect x="10" y="-12" width="1" height="1" fill-opacity="1.00"/><rect x="2" y="-11" width="1" height="1" fill-opacity="1.00"/><rect x="3" y="-11" width="1" height="1" fill-opacity="1.00"/><rect x="4" y="-11" width="1" height="1" fill-opacity="1.00"/><rect x="5" y="-11" width="1" height="1" fill-opacity="1.00"/><rect x="6" y="-11" width="1" height="1" fill-opacity="1.00"/><rect x="7" y="-11" width="1" height="1" fill-opacity="1.00"/><rect x="10" y="-11" width="1" height="1" fill-opacity="1.00"/><rect x="1" y="-10" width="1" height="1" fill-opacity="1.00"/><rect x="10" y="-10" width="1" height="1" fill-opacity="1.00"/><rect x="1" y="-9" width="1" height="1" fill-opacity="1.00"/><rect x="10" y="-9" width="1" height="1" fill-opacity="1.00"/><rect x="1" y="-8" width="1" height="1" fill-opacity="1.00"/><rect x="10" y="-8" width="1" height="1" fill-opacity="1.00"/><rect x="1" y="-7" width="1" height="1" fill-opacity="1.00"/><rect x="10" y="-7" width="1" height="1" fill-opacity="1.00"/><rect x="1" y="-6" width="1" height="1" fill-opacity="1.00"/><rect x="10" y="-6" width="1" height="1" fill-opacity="1.00"/><rect x="2" y="-5" width="1" height="1" fill-opacity="1.00"/><rect x="3" y="-5" width="1" height="1" fill-opacity="1.00"/><rect x="4" y="-5" width="1" height="1" fill-opacity="1.00"/><rect x="5" y="-5" width="1" height="1" fill-opacity="1.00"/><rect x="6" y="-5" width="1" height="1" fill-opacity="1.00"/><rect x="7" y="-5" width="1" height="1" fill-opacity="1.00"/><rect x="10" y="-5" width="1" height="1" fill-opacity="1.00"/><rect x="4" y="-4" width="1" height="1" fill-opacity="1.00"/><rect x="10" y="-4" width="1" height="1" fill-opacity="1.00"/><rect x="4" y="-3" width="1" height="1" fill-opacity="1.00"/><rect x="10" y="-3" width="1" height="1" fill-opacity="1.00"/><rect x="4" y="-2" width="1" height="1" fill-opacity="1.00"/><rect x="10" y="-2" width="1" height="1" fill-opacity="1.00"/><rect x="0" y="-1" width="1" height="1" fill-opacity="1.00"/><rect x="1" y="-1" width="1" height="1" fill-opacity="1.00"/><rect x="2" y="-1" width="1" height="1" fill-opacity="1.00"/><rect x="3" y="-1" width="1" height="1" fill-opacity="1.00"/><rect x="4" y="-1" width="1" height="1" fill-opacity="1.00"/><rect x="5" y="-1" width="1" height="1" fill-opacity="1.00"/><rect x="6" y="-1" width="1" height="1" fill-opacity="1.00"/><rect x="7" y="-1" width="1" height="1" fill-opacity="1.00"/><rect x="8" y="-1" width="1" height="1" fill-opacity="1.00"/><rect x="10" y="-1" width="1" height="1" fill-opacity="1.00"/><rect x="10" y="0" width="1" height="1" fill-opacity="1.00"/></g><g id="k17" fill="currentColor"><rect x="10" y="-12" width="1" height="1" fill-opacity="1.00"/><rect x="1" y="-11" width="1" height="1" fill-opacity="1.00"/><rect x="2" y="-11" width="1" height="1" fill-opacity="1.00"/><rect x="3" y="-11" width="1" height="1" fill-opacity="1.00"/><rect x="4" y="-11" width="1" height="1" fill-opacity="1.00"/><rect x="5" y="-11" width="1" height="1" fill-opacity="1.00"/><rect x="6" y="-11" width="1" height="1" fill-opacity="1.00"/><rect x="7" y="-11" width="1" height="1" fill-opacity="1.00"/><rect x="10" y="-11" width="1" height="1" fill-opacity="1.00"/><rect x="4" y="-10" width="1" height="1" fill-opacity="1.00"/><rect x="10" y="-10" width="1" height="1" fill-opacity="1.00"/><rect x="4" y="-9" width="1" height="1" fill-opacity="1.00"/><rect x="10" y="-9" width="1" height="1" fill-opacity="1.00"/><rect x="4" y="-8" width="1" height="1" fill-opacity="1.00"/><rect x="10" y="-8" width="1" height="1" fill-opacity="1.00"/><rect x="3" y="-7" width="1" height="1" fill-opacity="1.00"/><rect x="5" y="-7" width="1" height="1" fill-opacity="1.00"/><rect x="10" y="-7" width="1" height="1" fill-opacity="1.00"/><rect x="3" y="-6" width="1" height="1" fill-opacity="1.00"/><rect x="5" y="-6" width="1" height="1" fill-opacity="1.00"/><rect x="10" y="-6" width="1" height="1" fill-opacity="1.00"/><rect x="2" y="-5" width="1" height="1" fill-opacity="1.00"/><rect x="6" y="-5" width="1" height="1" fill-opacity="1.00"/><rect x="10" y="-5" width="1" height="1" fill-opacity="1.00"/><rect x="2" y="-4" width="1" height="1" fill-opacity="1.00"/><rect x="6" y="-4" width="1" height="1" fill-opacity="1.00"/><rect x="10" y="-4" width="1" height="1" fill-opacity="1.00"/><rect x="1" y="-3" width="1" height="1" fill-opacity="1.00"/><rect x="7" y="-3" width="1" height="1" fill-opacity="1.00"/><rect x="10" y="-3" width="1" height="1" fill-opacity="1.00"/><rect x="1" y="-2" width="1" height="1" fill-opacity="1.00"/><rect x="7" y="-2" width="1" height="1" fill-opacity="1.00"/><rect x="10" y="-2" width="1" height="1" fill-opacity="1.00"/><rect x="0" y="-1" width="1" height="1" fill-opacity="1.00"/><rect x="7" y="-1" width="1" height="1" fill-opacity="1.00"/><rect x="10" y="-1" width="1" height="1" fill-opacity="1.00"/><rect x="10" y="0" width="1" height="1" fill-opacity="1.00"/></g><g id="k12" fill="currentColor"><rect x="2" y="-12" width="1" height="1" fill-opacity="1.00"/><rect x="3" y="-12" width="1" height="1" fill-opacity="1.00"/><rect x="4" y="-12" width="1" height="1" fill-opacity="1.00"/><rect x="10" y="-12" width="1" height="1" fill-opacity="1.00"/><rect x="1" y="-11" width="1" height="1" fill-opacity="1.00"/><rect x="5" y="-11" width="1" height="1" fill-opacity="1.00"/><rect x="10" y="-11" width="1" height="1" fill-opacity="1.00"/><rect x="0" y="-10" width="1" height="1" fill-opacity="1.00"/><rect x="6" y="-10" width="1" height="1" fill-opacity="1.00"/><rect x="10" y="-10" width="1" height="1" fill-opacity="1.00"/><rect x="0" y="-9" width="1" height="1" fill-opacity="1.00"/><rect x="6" y="-9" width="1" height="1" fill-opacity="1.00"/><rect x="10" y="-9" width="1" height="1" fill-opacity="1.00"/><rect x="11" y="-9" width="1" height="1" fill-opacity="1.00"/><rect x="12" y="-9" width="1" height="1" fill-opacity="1.00"/><rect x="1" y="-8" width="1" height="1" fill-opacity="1.00"/><rect x="5" y="-8" width="1" height="1" fill-opacity="1.00"/><rect x="10" y="-8" width="1" height="1" fill-opacity="1.00"/><rect x="2" y="-7" width="1" height="1" fill-opacity="1.00"/><rect x="3" y="-7" width="1" height="1" fill-opacity="1.00"/><rect x="4" y="-7" width="1" height="1" fill-opacity="1.00"/><rect x="10" y="-7" width="1" height="1" fill-opacity="1.00"/><rect x="7" y="-6" width="1" height="1" fill-opacity="1.00"/><rect x="8" y="-6" width="1" height="1" fill-opacity="1.00"/><rect x="9" y="-6" width="1" height="1" fill-opacity="1.00"/><rect x="1" y="-4" width="1" height="1" fill-opacity="1.00"/><rect x="5" y="-4" width="1" height="1" fill-opacity="1.00"/><rect x="6" y="-4" width="1" height="1" fill-opacity="1.00"/><rect x="7" y="-4" width="1" height="1" fill-opacity="1.00"/><rect x="8" y="-4" width="1" height="1" fill-opacity="1.00"/><rect x="9" y="-4" width="1" height="1" fill-opacity="1.00"/><rect x="10" y="-4" width="1" height="1" fill-opacity="1.00"/><rect x="11" y="-4" width="1" height="1" fill-opacity="1.00"/><rect x="1" y="-3" width="1" height="1" fill-opacity="1.00"/><rect x="1" y="-2" width="1" height="1" fill-opacity="1.00"/><rect x="7" y="-2" width="1" height="1" fill-opacity="1.00"/><rect x="8" y="-2" width="1" height="1" fill-opacity="1.00"/><rect x="9" y="-2" width="1" height="1" fill-opacity="1.00"/><rect x="1" y="-1" width="1" height="1" fill-opacity="1.00"/><rect x="6" y="-1" width="1" height="1" fill-opacity="1.00"/><rect x="10" y="-1" width="1" height="1" fill-opacity="1.00"/><rect x="2" y="0" width="1" height="1" fill-opacity="1.00"/><rect x="3" y="0" width="1" height="1" fill-opacity="1.00"/><rect x="4" y="0" width="1" height="1" fill-opacity="1.00"/><rect x="5" y="0" width="1" height="1" fill-opacity="1.00"/><rect x="7" y="0" width="1" height="1" fill-opacity="1.00"/><rect x="8" y="0" width="1" height="1" fill-opacity="1.00"/><rect x="9" y="0" width="1" height="1" fill-opacity="1.00"/></g><g id="k6" fill="currentColor"><rect x="10" y="-12" width="1" height="1" fill-opacity="1.00"/><rect x="1" y="-11" width="1" height="1" fill-opacity="1.00"/><rect x="2" y="-11" width="1" height="1" fill-opacity="1.00"/><rect x="3" y="-11" width="1" height="1" fill-opacity="1.00"/><rect x="4" y="-11" width="1" height="1" fill-opacity="1.00"/><rect x="5" y="-11" width="1" height="1" fill-opacity="1.00"/><rect x="6" y="-11" width="1" height="1" fill-opacity="1.00"/><rect x="10" y="-11" width="1" height="1" fill-opacity="1.00"/><rect x="0" y="-10" width="1" height="1" fill-opacity="1.00"/><rect x="10" y="-10" width="1" height="1" fill-opacity="1.00"/><rect x="0" y="-9" width="1" height="1" fill-opacity="1.00"/><rect x="10" y="-9" width="1" height="1" fill-opacity="1.00"/><rect x="0" y="-8" width="1" height="1" fill-opacity="1.00"/><rect x="10" y="-8" width="1" height="1" fill-opacity="1.00"/><rect x="0" y="-7" width="1" height="1" fill-opacity="1.00"/><rect x="10" y="-7" width="1" height="1" fill-opacity="1.00"/><rect x="11" y="-7" width="1" height="1" fill-opacity="1.00"/><rect x="12" y="-7" width="1" height="1" fill-opacity="1.00"/><rect x="0" y="-6" width="1" height="1" fill-opacity="1.00"/><rect x="10" y="-6" width="1" height="1" fill-opacity="1.00"/><rect x="0" y="-5" width="1" height="1" fill-opacity="1.00"/><rect x="10" y="-5" width="1" height="1" fill-opacity="1.00"/><rect x="0" y="-4" width="1" height="1" fill-opacity="1.00"/><rect x="10" y="-4" width="1" height="1" fill-opacity="1.00"/><rect x="0" y="-3" width="1" height="1" fill-opacity="1.00"/><rect x="10" y="-3" width="1" height="1" fill-opacity="1.00"/><rect x="0" y="-2" width="1" height="1" fill-opacity="1.00"/><rect x="10" y="-2" width="1" height="1" fill-opacity="1.00"/><rect x="1" y="-1" width="1" height="1" fill-opacity="1.00"/><rect x="2" y="-1" width="1" height="1" fill-opacity="1.00"/><rect x="3" y="-1" width="1" height="1" fill-opacity="1.00"/><rect x="4" y="-1" width="1" height="1" fill-opacity="1.00"/><rect x="5" y="-1" width="1" height="1" fill-opacity="1.00"/><rect x="6" y="-1" width="1" height="1" fill-opacity="1.00"/><rect x="7" y="-1" width="1" height="1" fill-opacity="1.00"/><rect x="10" y="-1" width="1" height="1" fill-opacity="1.00"/><rect x="10" y="0" width="1" height="1" fill-opacity="1.00"/></g><g id="k10" fill="currentColor"><rect x="1" y="-12" width="1" height="1" fill-opacity="1.00"/><rect x="10" y="-12" width="1" height="1" fill-opacity="1.00"/><rect x="1" y="-11" width="1" height="1" fill-opacity="1.00"/><rect x="2" y="-11" width="1" height="1" fill-opacity="1.00"/><rect x="3" y="-11" width="1" height="1" fill-opacity="1.00"/><rect x="4" y="-11" width="1" height="1" fill-opacity="1.00"/><rect x="5" y="-11" width="1" height="1" fill-opacity="1.00"/><rect x="6" y="-11" width="1" height="1" fill-opacity="1.00"/><rect x="7" y="-11" width="1" height="1" fill-opacity="1.00"/><rect x="8" y="-11" width="1" height="1" fill-opacity="1.00"/><rect x="9" y="-11" width="1" height="1" fill-opacity="1.00"/><rect x="10" y="-11" width="1" height="1" fill-opacity="1.00"/><rect x="1" y="-10" width="1" height="1" fill-opacity="1.00"/><rect x="10" y="-10" width="1" height="1" fill-opacity="1.00"/><rect x="2" y="-9" width="1" height="1" fill-opacity="1.00"/><rect x="3" y="-9" width="1" height="1" fill-opacity="1.00"/><rect x="4" y="-9" width="1" height="1" fill-opacity="1.00"/><rect x="5" y="-9" width="1" height="1" fill-opacity="1.00"/><rect x="6" y="-9" width="1" height="1" fill-opacity="1.00"/><rect x="7" y="-9" width="1" height="1" fill-opacity="1.00"/><rect x="8" y="-9" width="1" height="1" fill-opacity="1.00"/><rect x="9" y="-9" width="1" height="1" fill-opacity="1.00"/><rect x="0" y="-6" width="1" height="1" fill-opacity="1.00"/><rect x="1" y="-6" width="1" height="1" fill-opacity="1.00"/><rect x="2" y="-6" width="1" height="1" fill-opacity="1.00"/><rect x="3" y="-6" width="1" height="1" fill-opacity="1.00"/><rect x="4" y="-6" width="1" height="1" fill-opacity="1.00"/><rect x="5" y="-6" width="1" height="1" fill-opacity="1.00"/><rect x="6" y="-6" width="1" height="1" fill-opacity="1.00"/><rect x="7" y="-6" width="1" height="1" fill-opacity="1.00"/><rect x="8" y="-6" width="1" height="1" fill-opacity="1.00"/><rect x="9" y="-6" width="1" height="1" fill-opacity="1.00"/><rect x="10" y="-6" width="1" height="1" fill-opacity="1.00"/><rect x="11" y="-6" width="1" height="1" fill-opacity="1.00"/><rect x="1" y="-4" width="1" height="1" fill-opacity="1.00"/><rect x="2" y="-4" width="1" height="1" fill-opacity="1.00"/><rect x="3" y="-4" width="1" height="1" fill-opacity="1.00"/><rect x="4" y="-4" width="1" height="1" fill-opacity="1.00"/><rect x="5" y="-4" width="1" height="1" fill-opacity="1.00"/><rect x="6" y="-4" width="1" height="1" fill-opacity="1.00"/><rect x="7" y="-4" width="1" height="1" fill-opacity="1.00"/><rect x="8" y="-4" width="1" height="1" fill-opacity="1.00"/><rect x="9" y="-4" width="1" height="1" fill-opacity="1.00"/><rect x="10" y="-3" width="1" height="1" fill-opacity="1.00"/><rect x="2" y="-2" width="1" height="1" fill-opacity="1.00"/><rect x="3" y="-2" width="1" height="1" fill-opacity="1.00"/><rect x="4" y="-2" width="1" height="1" fill-opacity="1.00"/><rect x="5" y="-2" width="1" height="1" fill-opacity="1.00"/><rect x="6" y="-2" width="1" height="1" fill-opacity="1.00"/><rect x="7" y="-2" width="1" height="1" fill-opacity="1.00"/><rect x="8" y="-2" width="1" height="1" fill-opacity="1.00"/><rect x="9" y="-2" width="1" height="1" fill-opacity="1.00"/><rect x="1" y="-1" width="1" height="1" fill-opacity="1.00"/><rect x="2" y="0" width="1" height="1" fill-opacity="1.00"/><rect x="3" y="0" width="1" height="1" fill-opacity="1.00"/><rect x="4" y="0" width="1" height="1" fill-opacity="1.00"/><rect x="5" y="0" width="1" height="1" fill-opacity="1.00"/><rect x="6" y="0" width="1" height="1" fill-opacity="1.00"/><rect x="7" y="0" width="1" height="1" fill-opacity="1.00"/><rect x="8" y="0" width="1" height="1" fill-opacity="1.00"/><rect x="9" y="0" width="1" height="1" fill-opacity="1.00"/><rect x="10" y="0" width="1" height="1" fill-opacity="1.00"/></g><g id="k9" fill="currentColor"><rect x="1" y="-12" width="1" height="1" fill-opacity="1.00"/><rect x="2" y="-12" width="1" height="1" fill-opacity="1.00"/><rect x="3" y="-12" width="1" height="1" fill-opacity="1.00"/><rect x="4" y="-12" width="1" height="1" fill-opacity="1.00"/><rect x="5" y="-12" width="1" height="1" fill-opacity="1.00"/><rect x="6" y="-12" width="1" height="1" fill-opacity="1.00"/><rect x="7" y="-12" width="1" height="1" fill-opacity="1.00"/><rect x="8" y="-12" width="1" height="1" fill-opacity="1.00"/><rect x="9" y="-12" width="1" height="1" fill-opacity="1.00"/><rect x="10" y="-11" width="1" height="1" fill-opacity="1.00"/><rect x="2" y="-10" width="1" height="1" fill-opacity="1.00"/><rect x="3" y="-10" width="1" height="1" fill-opacity="1.00"/><rect x="4" y="-10" width="1" height="1" fill-opacity="1.00"/><rect x="5" y="-10" width="1" height="1" fill-opacity="1.00"/><rect x="6" y="-10" width="1" height="1" fill-opacity="1.00"/><rect x="7" y="-10" width="1" height="1" fill-opacity="1.00"/><rect x="8" y="-10" width="1" height="1" fill-opacity="1.00"/><rect x="9" y="-10" width="1" height="1" fill-opacity="1.00"/><rect x="1" y="-9" width="1" height="1" fill-opacity="1.00"/><rect x="2" y="-8" width="1" height="1" fill-opacity="1.00"/><rect x="3" y="-8" width="1" height="1" fill-opacity="1.00"/><rect x="4" y="-8" width="1" height="1" fill-opacity="1.00"/><rect x="5" y="-8" width="1" height="1" fill-opacity="1.00"/><rect x="6" y="-8" width="1" height="1" fill-opacity="1.00"/><rect x="7" y="-8" width="1" height="1" fill-opacity="1.00"/><rect x="8" y="-8" width="1" height="1" fill-opacity="1.00"/><rect x="9" y="-8" width="1" height="1" fill-opacity="1.00"/><rect x="10" y="-8" width="1" height="1" fill-opacity="1.00"/><rect x="6" y="-7" width="1" height="1" fill-opacity="1.00"/><rect x="0" y="-6" width="1" height="1" fill-opacity="1.00"/><rect x="1" y="-6" width="1" height="1" fill-opacity="1.00"/><rect x="2" y="-6" width="1" height="1" fill-opacity="1.00"/><rect x="3" y="-6" width="1" height="1" fill-opacity="1.00"/><rect x="4" y="-6" width="1" height="1" fill-opacity="1.00"/><rect x="5" y="-6" width="1" height="1" fill-opacity="1.00"/><rect x="6" y="-6" width="1" height="1" fill-opacity="1.00"/><rect x="7" y="-6" width="1" height="1" fill-opacity="1.00"/><rect x="8" y="-6" width="1" height="1" fill-opacity="1.00"/><rect x="9" y="-6" width="1" height="1" fill-opacity="1.00"/><rect x="10" y="-6" width="1" height="1" fill-opacity="1.00"/><rect x="11" y="-6" width="1" height="1" fill-opacity="1.00"/><rect x="1" y="-3" width="1" height="1" fill-opacity="1.00"/><rect x="2" y="-3" width="1" height="1" fill-opacity="1.00"/><rect x="3" y="-3" width="1" height="1" fill-opacity="1.00"/><rect x="4" y="-3" width="1" height="1" fill-opacity="1.00"/><rect x="5" y="-3" width="1" height="1" fill-opacity="1.00"/><rect x="6" y="-3" width="1" height="1" fill-opacity="1.00"/><rect x="7" y="-3" width="1" height="1" fill-opacity="1.00"/><rect x="8" y="-3" width="1" height="1" fill-opacity="1.00"/><rect x="9" y="-3" width="1" height="1" fill-opacity="1.00"/><rect x="10" y="-2" width="1" height="1" fill-opacity="1.00"/><rect x="10" y="-1" width="1" height="1" fill-opacity="1.00"/><rect x="10" y="0" width="1" height="1" fill-opacity="1.00"/></g><g id="k1" fill="currentColor"><rect x="1" y="-11" width="1" height="1" fill-opacity="1.00"/><rect x="2" y="-11" width="1" height="1" fill-opacity="1.00"/><rect x="3" y="-11" width="1" height="1" fill-opacity="1.00"/><rect x="4" y="-11" width="1" height="1" fill-opacity="1.00"/><rect x="5" y="-11" width="1" height="1" fill-opacity="1.00"/><rect x="6" y="-11" width="1" height="1" fill-opacity="1.00"/><rect x="7" y="-11" width="1" height="1" fill-opacity="1.00"/><rect x="8" y="-11" width="1" height="1" fill-opacity="1.00"/><rect x="9" y="-11" width="1" height="1" fill-opacity="1.00"/><rect x="10" y="-10" width="1" height="1" fill-opacity="1.00"/><rect x="10" y="-9" width="1" height="1" fill-opacity="1.00"/><rect x="10" y="-8" width="1" height="1" fill-opacity="1.00"/><rect x="10" y="-7" width="1" height="1" fill-opacity="1.00"/><rect x="10" y="-6" width="1" height="1" fill-opacity="1.00"/><rect x="10" y="-5" width="1" height="1" fill-opacity="1.00"/><rect x="10" y="-4" width="1" height="1" fill-opacity="1.00"/><rect x="10" y="-3" width="1" height="1" fill-opacity="1.00"/><rect x="9" y="-2" width="1" height="1" fill-opacity="1.00"/><rect x="0" y="-1" width="1" height="1" fill-opacity="1.00"/><rect x="1" y="-1" width="1" height="1" fill-opacity="1.00"/><rect x="2" y="-1" width="1" height="1" fill-opacity="1.00"/><rect x="3" y="-1" width="1" height="1" fill-opacity="1.00"/><rect x="4" y="-1" width="1" height="1" fill-opacity="1.00"/><rect x="5" y="-1" width="1" height="1" fill-opacity="1.00"/><rect x="6" y="-1" width="1" height="1" fill-opacity="1.00"/><rect x="7" y="-1" width="1" height="1" fill-opacity="1.00"/><rect x="8" y="-1" width="1" height="1" fill-opacity="1.00"/><rect x="9" y="-1" width="1" height="1" fill-opacity="1.00"/><rect x="10" y="-1" width="1" height="1" fill-opacity="1.00"/><rect x="11" y="-1" width="1" height="1" fill-opacity="1.00"/></g><g id="k16" fill="currentColor"><rect x="2" y="-12" width="1" height="1" fill-opacity="1.00"/><rect x="3" y="-12" width="1" height="1" fill-opacity="1.00"/><rect x="4" y="-12" width="1" height="1" fill-opacity="1.00"/><rect x="10" y="-12" width="1" height="1" fill-opacity="1.00"/><rect x="1" y="-11" width="1" height="1" fill-opacity="1.00"/><rect x="5" y="-11" width="1" height="1" fill-opacity="1.00"/><rect x="10" y="-11" width="1" height="1" fill-opacity="1.00"/><rect x="0" y="-10" width="1" height="1" fill-opacity="1.00"/><rect x="6" y="-10" width="1" height="1" fill-opacity="1.00"/><rect x="10" y="-10" width="1" height="1" fill-opacity="1.00"/><rect x="0" y="-9" width="1" height="1" fill-opacity="1.00"/><rect x="6" y="-9" width="1" height="1" fill-opacity="1.00"/><rect x="10" y="-9" width="1" height="1" fill-opacity="1.00"/><rect x="0" y="-8" width="1" height="1" fill-opacity="1.00"/><rect x="6" y="-8" width="1" height="1" fill-opacity="1.00"/><rect x="10" y="-8" width="1" height="1" fill-opacity="1.00"/><rect x="1" y="-7" width="1" height="1" fill-opacity="1.00"/><rect x="5" y="-7" width="1" height="1" fill-opacity="1.00"/><rect x="10" y="-7" width="1" height="1" fill-opacity="1.00"/><rect x="2" y="-6" width="1" height="1" fill-opacity="1.00"/><rect x="3" y="-6" width="1" height="1" fill-opacity="1.00"/><rect x="4" y="-6" width="1" height="1" fill-opacity="1.00"/><rect x="10" y="-6" width="1" height="1" fill-opacity="1.00"/><rect x="1" y="-4" width="1" height="1" fill-opacity="1.00"/><rect x="10" y="-4" width="1" height="1" fill-opacity="1.00"/><rect x="1" y="-3" width="1" height="1" fill-opacity="1.00"/><rect x="10" y="-3" width="1" height="1" fill-opacity="1.00"/><rect x="1" y="-2" width="1" height="1" fill-opacity="1.00"/><rect x="2" y="-2" width="1" height="1" fill-opacity="1.00"/><rect x="3" y="-2" width="1" height="1" fill-opacity="1.00"/><rect x="4" y="-2" width="1" height="1" fill-opacity="1.00"/><rect x="5" y="-2" width="1" height="1" fill-opacity="1.00"/><rect x="6" y="-2" width="1" height="1" fill-opacity="1.00"/><rect x="7" y="-2" width="1" height="1" fill-opacity="1.00"/><rect x="8" y="-2" width="1" height="1" fill-opacity="1.00"/><rect x="9" y="-2" width="1" height="1" fill-opacity="1.00"/><rect x="10" y="-2" width="1" height="1" fill-opacity="1.00"/><rect x="1" y="-1" width="1" height="1" fill-opacity="1.00"/><rect x="10" y="-1" width="1" height="1" fill-opacity="1.00"/><rect x="2" y="0" width="1" height="1" fill-opacity="1.00"/><rect x="3" y="0" width="1" height="1" fill-opacity="1.00"/><rect x="4" y="0" width="1" height="1" fill-opacity="1.00"/><rect x="5" y="0" width="1" height="1" fill-opacity="1.00"/><rect x="6" y="0" width="1" height="1" fill-opacity="1.00"/><rect x="7" y="0" width="1" height="1" fill-opacity="1.00"/><rect x="8" y="0" width="1" height="1" fill-opacity="1.00"/><rect x="9" y="0" width="1" height="1" fill-opacity="1.00"/></g><g id="k5" fill="currentColor"><rect x="10" y="-12" width="1" height="1" fill-opacity="1.00"/><rect x="0" y="-11" width="1" height="1" fill-opacity="1.00"/><rect x="10" y="-11" width="1" height="1" fill-opacity="1.00"/><rect x="0" y="-10" width="1" height="1" fill-opacity="1.00"/><rect x="10" y="-10" width="1" height="1" fill-opacity="1.00"/><rect x="0" y="-9" width="1" height="1" fill-opacity="1.00"/><rect x="10" y="-9" width="1" height="1" fill-opacity="1.00"/><rect x="0" y="-8" width="1" height="1" fill-opacity="1.00"/><rect x="10" y="-8" width="1" height="1" fill-opacity="1.00"/><rect x="0" y="-7" width="1" height="1" fill-opacity="1.00"/><rect x="10" y="-7" width="1" height="1" fill-opacity="1.00"/><rect x="0" y="-6" width="1" height="1" fill-opacity="1.00"/><rect x="10" y="-6" width="1" height="1" fill-opacity="1.00"/><rect x="0" y="-5" width="1" height="1" fill-opacity="1.00"/><rect x="10" y="-5" width="1" height="1" fill-opacity="1.00"/><rect x="0" y="-4" width="1" height="1" fill-opacity="1.00"/><rect x="10" y="-4" width="1" height="1" fill-opacity="1.00"/><rect x="0" y="-3" width="1" height="1" fill-opacity="1.00"/><rect x="10" y="-3" width="1" height="1" fill-opacity="1.00"/><rect x="0" y="-2" width="1" height="1" fill-opacity="1.00"/><rect x="10" y="-2" width="1" height="1" fill-opacity="1.00"/><rect x="1" y="-1" width="1" height="1" fill-opacity="1.00"/><rect x="2" y="-1" width="1" height="1" fill-opacity="1.00"/><rect x="3" y="-1" width="1" height="1" fill-opacity="1.00"/><rect x="4" y="-1" width="1" height="1" fill-opacity="1.00"/><rect x="5" y="-1" width="1" height="1" fill-opacity="1.00"/><rect x="6" y="-1" width="1" height="1" fill-opacity="1.00"/><rect x="7" y="-1" width="1" height="1" fill-opacity="1.00"/><rect x="10" y="-1" width="1" height="1" fill-opacity="1.00"/><rect x="10" y="0" width="1" height="1" fill-opacity="1.00"/></g><g id="k15" fill="currentColor"><rect x="2" y="-12" width="1" height="1" fill-opacity="1.00"/><rect x="3" y="-12" width="1" height="1" fill-opacity="1.00"/><rect x="4" y="-12" width="1" height="1" fill-opacity="1.00"/><rect x="10" y="-12" width="1" height="1" fill-opacity="1.00"/><rect x="1" y="-11" width="1" height="1" fill-opacity="1.00"/><rect x="5" y="-11" width="1" height="1" fill-opacity="1.00"/><rect x="10" y="-11" width="1" height="1" fill-opacity="1.00"/><rect x="0" y="-10" width="1" height="1" fill-opacity="1.00"/><rect x="6" y="-10" width="1" height="1" fill-opacity="1.00"/><rect x="10" y="-10" width="1" height="1" fill-opacity="1.00"/><rect x="0" y="-9" width="1" height="1" fill-opacity="1.00"/><rect x="6" y="-9" width="1" height="1" fill-opacity="1.00"/><rect x="10" y="-9" width="1" height="1" fill-opacity="1.00"/><rect x="0" y="-8" width="1" height="1" fill-opacity="1.00"/><rect x="6" y="-8" width="1" height="1" fill-opacity="1.00"/><rect x="10" y="-8" width="1" height="1" fill-opacity="1.00"/><rect x="1" y="-7" width="1" height="1" fill-opacity="1.00"/><rect x="5" y="-7" width="1" height="1" fill-opacity="1.00"/><rect x="10" y="-7" width="1" height="1" fill-opacity="1.00"/><rect x="2" y="-6" width="1" height="1" fill-opacity="1.00"/><rect x="3" y="-6" width="1" height="1" fill-opacity="1.00"/><rect x="4" y="-6" width="1" height="1" fill-opacity="1.00"/><rect x="10" y="-6" width="1" height="1" fill-opacity="1.00"/><rect x="10" y="-5" width="1" height="1" fill-opacity="1.00"/><rect x="10" y="-4" width="1" height="1" fill-opacity="1.00"/><rect x="1" y="-3" width="1" height="1" fill-opacity="1.00"/><rect x="10" y="-3" width="1" height="1" fill-opacity="1.00"/><rect x="1" y="-2" width="1" height="1" fill-opacity="1.00"/><rect x="10" y="-2" width="1" height="1" fill-opacity="1.00"/><rect x="1" y="-1" width="1" height="1" fill-opacity="1.00"/><rect x="2" y="0" width="1" height="1" fill-opacity="1.00"/><rect x="3" y="0" width="1" height="1" fill-opacity="1.00"/><rect x="4" y="0" width="1" height="1" fill-opacity="1.00"/><rect x="5" y="0" width="1" height="1" fill-opacity="1.00"/><rect x="6" y="0" width="1" height="1" fill-opacity="1.00"/><rect x="7" y="0" width="1" height="1" fill-opacity="1.00"/><rect x="8" y="0" width="1" height="1" fill-opacity="1.00"/><rect x="9" y="0" width="1" height="1" fill-opacity="1.00"/><rect x="10" y="0" width="1" height="1" fill-opacity="1.00"/></g><g id="k8" fill="currentColor"><rect x="10" y="-12" width="1" height="1" fill-opacity="1.00"/><rect x="0" y="-11" width="1" height="1" fill-opacity="1.00"/><rect x="1" y="-11" width="1" height="1" fill-opacity="1.00"/><rect x="2" y="-11" width="1" height="1" fill-opacity="1.00"/><rect x="3" y="-11" width="1" height="1" fill-opacity="1.00"/><rect x="4" y="-11" width="1" height="1" fill-opacity="1.00"/><rect x="5" y="-11" width="1" height="1" fill-opacity="1.00"/><rect x="10" y="-11" width="1" height="1" fill-opacity="1.00"/><rect x="6" y="-10" width="1" height="1" fill-opacity="1.00"/><rect x="10" y="-10" width="1" height="1" fill-opacity="1.00"/><rect x="6" y="-9" width="1" height="1" fill-opacity="1.00"/><rect x="10" y="-9" width="1" height="1" fill-opacity="1.00"/><rect x="6" y="-8" width="1" height="1" fill-opacity="1.00"/><rect x="10" y="-8" width="1" height="1" fill-opacity="1.00"/><rect x="6" y="-7" width="1" height="1" fill-opacity="1.00"/><rect x="10" y="-7" width="1" height="1" fill-opacity="1.00"/><rect x="11" y="-7" width="1" height="1" fill-opacity="1.00"/><rect x="12" y="-7" width="1" height="1" fill-opacity="1.00"/><rect x="1" y="-6" width="1" height="1" fill-opacity="1.00"/><rect x="2" y="-6" width="1" height="1" fill-opacity="1.00"/><rect x="3" y="-6" width="1" height="1" fill-opacity="1.00"/><rect x="4" y="-6" width="1" height="1" fill-opacity="1.00"/><rect x="5" y="-6" width="1" height="1" fill-opacity="1.00"/><rect x="10" y="-6" width="1" height="1" fill-opacity="1.00"/><rect x="0" y="-5" width="1" height="1" fill-opacity="1.00"/><rect x="10" y="-5" width="1" height="1" fill-opacity="1.00"/><rect x="0" y="-4" width="1" height="1" fill-opacity="1.00"/><rect x="10" y="-4" width="1" height="1" fill-opacity="1.00"/><rect x="0" y="-3" width="1" height="1" fill-opacity="1.00"/><rect x="10" y="-3" width="1" height="1" fill-opacity="1.00"/><rect x="0" y="-2" width="1" height="1" fill-opacity="1.00"/><rect x="10" y="-2" width="1" height="1" fill-opacity="1.00"/><rect x="1" y="-1" width="1" height="1" fill-opacity="1.00"/><rect x="2" y="-1" width="1" height="1" fill-opacity="1.00"/><rect x="3" y="-1" width="1" height="1" fill-opacity="1.00"/><rect x="4" y="-1" width="1" height="1" fill-opacity="1.00"/><rect x="5" y="-1" width="1" height="1" fill-opacity="1.00"/><rect x="6" y="-1" width="1" height="1" fill-opacity="1.00"/><rect x="7" y="-1" width="1" height="1" fill-opacity="1.00"/><rect x="8" y="-1" width="1" height="1" fill-opacity="1.00"/><rect x="10" y="-1" width="1" height="1" fill-opacity="1.00"/><rect x="10" y="0" width="1" height="1" fill-opacity="1.00"/></g></defs><use href="#k19" x="226" y="314" style="color:#6a9955"/><use href="#k18" x="240" y="314" style="color:#6a9955"/><use href="#k4" x="254" y="314" style="color:#6a9955"/><use href="#k19" x="307" y="314" style="color:#6a9955"/><use href="#k18" x="321" y="314" style="color:#6a9955"/><use href="#k4" x="335" y="314" style="color:#6a9955"/><use href="#k3" x="356" y="314" style="color:#6a9955"/><use href="#k14" x="370" y="314" style="color:#6a9955"/><use href="#k13" x="384" y="314" style="color:#6a9955"/><use href="#k2" x="406" y="314" style="color:#6a9955"/><use href="#k14" x="420" y="314" style="color:#6a9955"/><use href="#k0" x="434" y="314" style="color:#6a9955"/><use href="#k11" x="456" y="314" style="color:#6a9955"/><use href="#k20" x="470" y="314" style="color:#6a9955"/><use href="#k14" x="484" y="314" style="color:#6a9955"/><use href="#k7" x="506" y="314" style="color:#6a9955"/><use href="#k17" x="520" y="314" style="color:#6a9955"/><use href="#k12" x="541" y="314" style="color:#6a9955"/><use href="#k4" x="555" y="314" style="color:#6a9955"/><use href="#k6" x="569" y="314" style="color:#6a9955"/><use href="#k10" x="126" y="466" style="color:#cccccc"/><use href="#k9" x="140" y="466" style="color:#cccccc"/><use href="#k19" x="162" y="466" style="color:#cccccc"/><use href="#k1" x="176" y="466" style="color:#cccccc"/><use href="#k16" x="190" y="466" style="color:#cccccc"/><use href="#k5" x="204" y="466" style="color:#cccccc"/><use href="#k6" x="218" y="466" style="color:#cccccc"/><use href="#k15" x="134" y="485" style="color:#cccccc"/><use href="#k8" x="148" y="485" style="color:#cccccc"/><use href="#k15" x="162" y="485" style="color:#cccccc"/><use href="#k19" x="184" y="485" style="color:#cccccc"/><use href="#k1" x="198" y="485" style="color:#cccccc"/><use href="#k16" x="212" y="485" style="color:#cccccc"/><use href="#k5" x="226" y="485" style="color:#cccccc"/><use href="#k6" x="240" y="485" style="color:#cccccc"/><use href="#k15" x="134" y="504" style="color:#cccccc"/><use href="#k8" x="148" y="504" style="color:#cccccc"/><use href="#k15" x="162" y="504" style="color:#cccccc"/><use href="#k19" x="184" y="504" style="color:#cccccc"/><use href="#k1" x="198" y="504" style="color:#cccccc"/><use href="#k16" x="212" y="504" style="color:#cccccc"/><use href="#k5" x="226" y="504" style="color:#cccccc"/><use href="#k6" x="240" y="504" style="color:#cccccc"/></svg>
<div style="position:absolute;left:306px;top:471px;width:2px;height:19px;background:#aeafad"></div>
<svg style="position:absolute;left:698px;top:53px" width="66" height="60" viewBox="0 0 66 60"><path fill="#808080" fill-opacity="0.25" d="M0 0h1v1h-1zM0 1h1v1h-1zM1 0h1v1h-1zM14 0h1v1h-1zM14 1h1v1h-1zM0 2h1v1h-1zM0 3h1v1h-1zM15 2h1v1h-1zM15 3h1v1h-1zM0 4h1v1h-1zM0 5h1v1h-1zM5 4h1v1h-1zM5 5h1v1h-1zM4 6h1v1h-1zM4 7h1v1h-1zM25 6h1v1h-1zM25 7h1v1h-1zM4 8h1v1h-1zM4 9h1v1h-1zM4 10h1v1h-1zM4 11h1v1h-1zM10 10h1v1h-1zM10 11h1v1h-1zM4 34h1v1h-1zM4 35h1v1h-1zM5 34h1v1h-1zM5 35h1v1h-1zM11 34h1v1h-1zM11 35h1v1h-1zM4 36h1v1h-1zM4 37h1v1h-1zM10 36h1v1h-1zM10 37h1v1h-1zM19 36h1v1h-1zM19 37h1v1h-1zM20 36h1v1h-1zM20 37h1v1h-1zM26 36h1v1h-1zM26 37h1v1h-1zM0 38h1v1h-1zM0 39h1v1h-1zM1 38h1v1h-1zM1 39h1v1h-1zM6 38h1v1h-1zM6 39h1v1h-1zM0 40h1v1h-1zM0 41h1v1h-1zM5 40h1v1h-1zM5 41h1v1h-1zM4 42h1v1h-1zM4 43h1v1h-1zM8 42h1v1h-1zM8 43h1v1h-1zM24 42h1v1h-1zM24 43h1v1h-1zM25 42h1v1h-1zM25 43h1v1h-1zM29 42h1v1h-1zM29 43h1v1h-1zM4 44h1v1h-1zM4 45h1v1h-1zM9 44h1v1h-1zM9 45h1v1h-1zM27 44h1v1h-1zM27 45h1v1h-1zM28 44h1v1h-1zM28 45h1v1h-1zM33 44h1v1h-1zM33 45h1v1h-1zM4 46h1v1h-1zM4 47h1v1h-1zM9 46h1v1h-1zM9 47h1v1h-1zM27 46h1v1h-1zM27 47h1v1h-1zM28 46h1v1h-1zM28 47h1v1h-1zM33 46h1v1h-1zM33 47h1v1h-1zM0 48h1v1h-1zM0 49h1v1h-1zM1 48h1v1h-1zM1 49h1v1h-1zM6 48h1v1h-1zM6 49h1v1h-1zM0 50h1v1h-1zM0 51h1v1h-1zM1 50h1v1h-1zM1 51h1v1h-1zM6 50h1v1h-1zM6 51h1v1h-1z"/><path fill="#808080" fill-opacity="0.125" d="M1 1h1v1h-1z"/><path fill="#569cd6" fill-opacity="0.625" d="M2 0h1v1h-1zM2 1h1v1h-1zM3 1h1v1h-1zM7 0h1v1h-1zM8 1h1v1h-1zM3 3h1v1h-1zM2 5h1v1h-1zM3 5h1v1h-1zM4 5h1v1h-1zM5 7h1v1h-1zM6 7h1v1h-1zM8 7h1v1h-1zM5 9h1v1h-1zM6 9h1v1h-1zM8 9h1v1h-1zM9 11h1v1h-1zM10 35h1v1h-1zM9 37h1v1h-1zM25 37h1v1h-1zM3 39h1v1h-1zM4 39h1v1h-1zM5 39h1v1h-1zM1 41h1v1h-1zM3 41h1v1h-1zM5 43h1v1h-1zM26 43h1v1h-1zM6 45h1v1h-1zM7 45h1v1h-1zM30 45h1v1h-1zM31 45h1v1h-1zM6 47h1v1h-1zM7 47h1v1h-1zM30 47h1v1h-1zM31 47h1v1h-1zM2 49h1v1h-1zM4 49h1v1h-1zM4 51h1v1h-1z"/><path fill="#569cd6" fill-opacity="0.5" d="M3 0h1v1h-1zM4 0h1v1h-1zM4 1h1v1h-1zM5 0h1v1h-1zM6 0h1v1h-1zM8 0h1v1h-1zM1 2h1v1h-1zM1 3h1v1h-1zM3 2h1v1h-1zM1 4h1v1h-1zM1 5h1v1h-1zM4 4h1v1h-1zM5 6h1v1h-1zM5 8h1v1h-1zM5 11h1v1h-1zM7 11h1v1h-1zM6 35h1v1h-1zM8 35h1v1h-1zM2 38h1v1h-1zM2 39h1v1h-1zM5 38h1v1h-1zM1 40h1v1h-1zM2 41h1v1h-1zM3 40h1v1h-1zM4 41h1v1h-1zM5 42h1v1h-1zM7 43h1v1h-1zM26 42h1v1h-1zM28 43h1v1h-1zM5 45h1v1h-1zM8 45h1v1h-1zM29 45h1v1h-1zM32 45h1v1h-1zM5 47h1v1h-1zM8 47h1v1h-1zM29 47h1v1h-1zM32 47h1v1h-1zM2 48h1v1h-1zM3 49h1v1h-1zM4 48h1v1h-1zM5 49h1v1h-1zM2 50h1v1h-1zM2 51h1v1h-1zM4 50h1v1h-1z"/><path fill="#569cd6" fill-opacity="0.25" d="M5 1h1v1h-1zM6 1h1v1h-1zM4 3h1v1h-1zM5 10h1v1h-1zM7 10h1v1h-1zM8 11h1v1h-1zM6 34h1v1h-1zM8 34h1v1h-1zM9 35h1v1h-1zM8 37h1v1h-1zM24 37h1v1h-1zM4 40h1v1h-1zM7 42h1v1h-1zM28 42h1v1h-1zM5 44h1v1h-1zM29 44h1v1h-1zM5 46h1v1h-1zM29 46h1v1h-1zM5 48h1v1h-1zM5 51h1v1h-1z"/><path fill="#569cd6" fill-opacity="0.375" d="M7 1h1v1h-1zM2 2h1v1h-1zM2 3h1v1h-1zM4 2h1v1h-1zM2 4h1v1h-1zM3 4h1v1h-1zM6 6h1v1h-1zM7 6h1v1h-1zM7 7h1v1h-1zM8 6h1v1h-1zM6 8h1v1h-1zM7 8h1v1h-1zM7 9h1v1h-1zM8 8h1v1h-1zM6 10h1v1h-1zM6 11h1v1h-1zM8 10h1v1h-1zM9 10h1v1h-1zM7 34h1v1h-1zM7 35h1v1h-1zM9 34h1v1h-1zM10 34h1v1h-1zM5 36h1v1h-1zM5 37h1v1h-1zM6 36h1v1h-1zM6 37h1v1h-1zM7 36h1v1h-1zM7 37h1v1h-1zM8 36h1v1h-1zM9 36h1v1h-1zM21 36h1v1h-1zM21 37h1v1h-1zM22 36h1v1h-1zM22 37h1v1h-1zM23 36h1v1h-1zM23 37h1v1h-1zM24 36h1v1h-1zM25 36h1v1h-1zM3 38h1v1h-1zM4 38h1v1h-1zM2 40h1v1h-1zM6 42h1v1h-1zM6 43h1v1h-1zM27 42h1v1h-1zM27 43h1v1h-1zM6 44h1v1h-1zM7 44h1v1h-1zM8 44h1v1h-1zM30 44h1v1h-1zM31 44h1v1h-1zM32 44h1v1h-1zM6 46h1v1h-1zM7 46h1v1h-1zM8 46h1v1h-1zM30 46h1v1h-1zM31 46h1v1h-1zM32 46h1v1h-1zM3 48h1v1h-1zM3 50h1v1h-1zM3 51h1v1h-1zM5 50h1v1h-1z"/><path fill="#9cdcfe" fill-opacity="0.5" d="M10 0h1v1h-1zM10 1h1v1h-1zM12 0h1v1h-1zM8 3h1v1h-1zM11 6h1v1h-1zM11 7h1v1h-1zM14 7h1v1h-1zM10 9h1v1h-1zM12 8h1v1h-1zM27 9h1v1h-1zM28 9h1v1h-1zM31 9h1v1h-1zM12 14h1v1h-1zM15 15h1v1h-1zM18 15h1v1h-1zM19 15h1v1h-1zM20 15h1v1h-1zM21 14h1v1h-1zM24 15h1v1h-1zM26 15h1v1h-1zM12 16h1v1h-1zM12 17h1v1h-1zM16 16h1v1h-1zM16 17h1v1h-1zM12 24h1v1h-1zM15 25h1v1h-1zM18 25h1v1h-1zM19 25h1v1h-1zM20 25h1v1h-1zM21 24h1v1h-1zM24 25h1v1h-1zM26 25h1v1h-1zM12 28h1v1h-1zM12 29h1v1h-1zM16 28h1v1h-1zM16 29h1v1h-1z"/><path fill="#9cdcfe" fill-opacity="0.375" d="M11 0h1v1h-1zM11 1h1v1h-1zM13 0h1v1h-1zM6 2h1v1h-1zM7 2h1v1h-1zM8 2h1v1h-1zM9 2h1v1h-1zM10 6h1v1h-1zM10 7h1v1h-1zM12 6h1v1h-1zM13 6h1v1h-1zM15 6h1v1h-1zM16 6h1v1h-1zM16 7h1v1h-1zM10 8h1v1h-1zM11 8h1v1h-1zM13 8h1v1h-1zM26 8h1v1h-1zM26 9h1v1h-1zM27 8h1v1h-1zM28 8h1v1h-1zM29 8h1v1h-1zM29 9h1v1h-1zM30 8h1v1h-1zM31 8h1v1h-1zM32 8h1v1h-1zM32 9h1v1h-1zM13 14h1v1h-1zM14 14h1v1h-1zM14 15h1v1h-1zM15 14h1v1h-1zM16 14h1v1h-1zM17 14h1v1h-1zM18 14h1v1h-1zM20 14h1v1h-1zM23 14h1v1h-1zM23 15h1v1h-1zM24 14h1v1h-1zM25 14h1v1h-1zM26 14h1v1h-1zM27 14h1v1h-1zM13 16h1v1h-1zM14 16h1v1h-1zM14 17h1v1h-1zM15 16h1v1h-1zM17 16h1v1h-1zM17 17h1v1h-1zM13 24h1v1h-1zM14 24h1v1h-1zM14 25h1v1h-1zM15 24h1v1h-1zM16 24h1v1h-1zM17 24h1v1h-1zM18 24h1v1h-1zM20 24h1v1h-1zM23 24h1v1h-1zM23 25h1v1h-1zM24 24h1v1h-1zM25 24h1v1h-1zM26 24h1v1h-1zM27 24h1v1h-1zM13 28h1v1h-1zM14 28h1v1h-1zM14 29h1v1h-1zM15 28h1v1h-1zM17 28h1v1h-1zM17 29h1v1h-1z"/><path fill="#9cdcfe" fill-opacity="0.625" d="M12 1h1v1h-1zM7 3h1v1h-1zM9 3h1v1h-1zM12 7h1v1h-1zM15 7h1v1h-1zM11 9h1v1h-1zM12 9h1v1h-1zM13 9h1v1h-1zM30 9h1v1h-1zM12 15h1v1h-1zM13 15h1v1h-1zM16 15h1v1h-1zM21 15h1v1h-1zM13 17h1v1h-1zM15 17h1v1h-1zM12 25h1v1h-1zM13 25h1v1h-1zM16 25h1v1h-1zM21 25h1v1h-1zM13 29h1v1h-1zM15 29h1v1h-1z"/><path fill="#9cdcfe" fill-opacity="0.25" d="M13 1h1v1h-1zM6 3h1v1h-1zM13 7h1v1h-1zM14 6h1v1h-1zM17 15h1v1h-1zM19 14h1v1h-1zM25 15h1v1h-1zM27 15h1v1h-1zM17 25h1v1h-1zM19 24h1v1h-1zM25 25h1v1h-1zM27 25h1v1h-1z"/><path fill="#cccccc" fill-opacity="0.375" d="M10 2h1v1h-1zM17 6h1v1h-1zM14 8h1v1h-1zM33 8h1v1h-1zM12 12h1v1h-1zM12 13h1v1h-1zM8 18h1v1h-1zM8 19h1v1h-1zM13 22h1v1h-1zM13 23h1v1h-1zM8 30h1v1h-1zM8 31h1v1h-1zM12 36h1v1h-1zM13 36h1v1h-1zM13 37h1v1h-1zM16 36h1v1h-1zM17 36h1v1h-1zM18 36h1v1h-1zM18 37h1v1h-1zM9 42h1v1h-1zM9 43h1v1h-1zM10 42h1v1h-1zM10 43h1v1h-1zM11 42h1v1h-1zM11 43h1v1h-1zM12 42h1v1h-1zM12 43h1v1h-1zM14 42h1v1h-1zM14 43h1v1h-1zM15 42h1v1h-1zM15 43h1v1h-1zM16 42h1v1h-1zM16 43h1v1h-1zM17 42h1v1h-1zM17 43h1v1h-1zM18 42h1v1h-1zM18 43h1v1h-1zM19 42h1v1h-1zM19 43h1v1h-1zM20 42h1v1h-1zM20 43h1v1h-1zM21 42h1v1h-1zM21 43h1v1h-1zM22 42h1v1h-1zM22 43h1v1h-1zM23 42h1v1h-1zM23 43h1v1h-1zM10 44h1v1h-1zM10 45h1v1h-1zM11 44h1v1h-1zM11 45h1v1h-1zM12 44h1v1h-1zM12 45h1v1h-1zM13 44h1v1h-1zM13 45h1v1h-1zM14 44h1v1h-1zM14 45h1v1h-1zM15 44h1v1h-1zM15 45h1v1h-1zM17 44h1v1h-1zM17 45h1v1h-1zM18 44h1v1h-1zM18 45h1v1h-1zM19 44h1v1h-1zM19 45h1v1h-1zM20 44h1v1h-1zM20 45h1v1h-1zM21 44h1v1h-1zM21 45h1v1h-1zM22 44h1v1h-1zM22 45h1v1h-1zM23 44h1v1h-1zM23 45h1v1h-1zM24 44h1v1h-1zM24 45h1v1h-1zM25 44h1v1h-1zM25 45h1v1h-1zM26 44h1v1h-1zM26 45h1v1h-1zM10 46h1v1h-1zM10 47h1v1h-1zM11 46h1v1h-1zM11 47h1v1h-1zM12 46h1v1h-1zM12 47h1v1h-1zM13 46h1v1h-1zM13 47h1v1h-1zM14 46h1v1h-1zM14 47h1v1h-1zM15 46h1v1h-1zM15 47h1v1h-1zM17 46h1v1h-1zM17 47h1v1h-1zM18 46h1v1h-1zM18 47h1v1h-1zM19 46h1v1h-1zM19 47h1v1h-1zM20 46h1v1h-1zM20 47h1v1h-1zM21 46h1v1h-1zM21 47h1v1h-1zM22 46h1v1h-1zM22 47h1v1h-1zM23 46h1v1h-1zM23 47h1v1h-1zM24 46h1v1h-1zM24 47h1v1h-1zM25 46h1v1h-1zM25 47h1v1h-1zM26 46h1v1h-1zM26 47h1v1h-1z"/><path fill="#cccccc" fill-opacity="0.25" d="M10 3h1v1h-1zM17 7h1v1h-1zM14 9h1v1h-1zM33 9h1v1h-1zM14 36h1v1h-1z"/><path fill="#ce9178" fill-opacity="0.5" d="M11 2h1v1h-1zM13 3h1v1h-1zM14 2h1v1h-1zM18 6h1v1h-1zM19 6h1v1h-1zM20 6h1v1h-1zM21 6h1v1h-1zM23 6h1v1h-1zM24 6h1v1h-1zM15 8h1v1h-1zM16 9h1v1h-1zM21 9h1v1h-1zM24 8h1v1h-1zM34 8h1v1h-1zM37 8h1v1h-1zM39 8h1v1h-1zM39 9h1v1h-1zM41 8h1v1h-1zM43 9h1v1h-1zM50 8h1v1h-1zM52 8h1v1h-1zM52 9h1v1h-1zM56 9h1v1h-1zM63 9h1v1h-1zM33 14h1v1h-1zM31 24h1v1h-1zM33 25h1v1h-1z"/><path fill="#ce9178" fill-opacity="0.375" d="M12 2h1v1h-1zM13 2h1v1h-1zM21 7h1v1h-1zM17 8h1v1h-1zM17 9h1v1h-1zM18 8h1v1h-1zM20 8h1v1h-1zM21 8h1v1h-1zM22 8h1v1h-1zM23 8h1v1h-1zM23 9h1v1h-1zM36 8h1v1h-1zM36 9h1v1h-1zM38 8h1v1h-1zM38 9h1v1h-1zM40 8h1v1h-1zM42 8h1v1h-1zM44 8h1v1h-1zM44 9h1v1h-1zM45 8h1v1h-1zM45 9h1v1h-1zM46 8h1v1h-1zM49 8h1v1h-1zM49 9h1v1h-1zM51 8h1v1h-1zM51 9h1v1h-1zM55 8h1v1h-1zM55 9h1v1h-1zM56 8h1v1h-1zM57 8h1v1h-1zM57 9h1v1h-1zM58 8h1v1h-1zM58 9h1v1h-1zM59 8h1v1h-1zM59 9h1v1h-1zM60 8h1v1h-1zM61 8h1v1h-1zM64 8h1v1h-1zM64 9h1v1h-1zM65 8h1v1h-1zM31 14h1v1h-1zM32 14h1v1h-1zM32 24h1v1h-1zM34 24h1v1h-1z"/><path fill="#ce9178" fill-opacity="0.625" d="M12 3h1v1h-1zM19 7h1v1h-1zM23 7h1v1h-1zM18 9h1v1h-1zM20 9h1v1h-1zM37 9h1v1h-1zM41 9h1v1h-1zM42 9h1v1h-1zM46 9h1v1h-1zM50 9h1v1h-1zM60 9h1v1h-1zM65 9h1v1h-1zM32 15h1v1h-1zM33 15h1v1h-1zM31 25h1v1h-1zM34 25h1v1h-1z"/><path fill="#ce9178" fill-opacity="0.25" d="M20 7h1v1h-1zM16 8h1v1h-1zM19 8h1v1h-1zM22 9h1v1h-1zM35 8h1v1h-1zM40 9h1v1h-1zM43 8h1v1h-1zM48 8h1v1h-1zM61 9h1v1h-1zM63 8h1v1h-1zM31 15h1v1h-1zM32 25h1v1h-1zM33 24h1v1h-1z"/><path fill="#ce9178" fill-opacity="0.125" d="M22 7h1v1h-1zM47 9h1v1h-1zM53 9h1v1h-1zM62 9h1v1h-1z"/><path fill="#ce9178" fill-opacity="0.75" d="M19 9h1v1h-1zM35 9h1v1h-1zM48 9h1v1h-1z"/><path fill="#d7ba7d" fill-opacity="0.5" d="M8 12h1v1h-1zM10 13h1v1h-1zM8 23h1v1h-1zM11 23h1v1h-1z"/><path fill="#d7ba7d" fill-opacity="0.625" d="M8 13h1v1h-1zM9 23h1v1h-1zM10 23h1v1h-1z"/><path fill="#d7ba7d" fill-opacity="0.375" d="M9 12h1v1h-1zM9 13h1v1h-1zM9 22h1v1h-1zM10 22h1v1h-1zM11 22h1v1h-1z"/><path fill="#d7ba7d" fill-opacity="0.25" d="M10 12h1v1h-1zM8 22h1v1h-1z"/><path fill="#9cdcfe" fill-opacity="0.125" d="M22 15h1v1h-1zM22 25h1v1h-1z"/><path fill="#cccccc" fill-opacity="0.125" d="M28 14h1v1h-1zM28 15h1v1h-1zM34 14h1v1h-1zM34 15h1v1h-1zM18 16h1v1h-1zM18 17h1v1h-1zM25 16h1v1h-1zM25 17h1v1h-1zM28 24h1v1h-1zM28 25h1v1h-1zM35 24h1v1h-1zM35 25h1v1h-1zM18 28h1v1h-1zM18 29h1v1h-1zM25 28h1v1h-1zM25 29h1v1h-1z"/><path fill="#eeeeee" fill-opacity="0.75" d="M30 14h1v2h-1zM30 24h1v2h-1z"/><path fill="#b5cea8" fill-opacity="0.375" d="M20 16h1v1h-1zM20 17h1v1h-1zM23 16h1v1h-1zM20 28h1v1h-1zM20 29h1v1h-1zM23 28h1v1h-1z"/><path fill="#b5cea8" fill-opacity="0.5" d="M21 16h1v1h-1zM22 16h1v1h-1zM24 17h1v1h-1zM21 28h1v1h-1zM22 28h1v1h-1zM24 29h1v1h-1z"/><path fill="#b5cea8" fill-opacity="0.625" d="M21 17h1v1h-1zM22 17h1v1h-1zM23 17h1v1h-1zM21 29h1v1h-1zM22 29h1v1h-1zM23 29h1v1h-1z"/><path fill="#b5cea8" fill-opacity="0.25" d="M24 16h1v1h-1zM24 28h1v1h-1z"/><path fill="#6a9955" fill-opacity="0.25" d="M12 26h1v1h-1zM12 27h1v1h-1zM17 27h1v1h-1zM29 26h1v1h-1z"/><path fill="#6a9955" fill-opacity="0.375" d="M13 26h1v1h-1zM15 26h1v1h-1zM15 27h1v1h-1zM17 26h1v1h-1zM18 26h1v1h-1zM18 27h1v1h-1zM19 26h1v1h-1zM20 26h1v1h-1zM22 26h1v1h-1zM22 27h1v1h-1zM23 26h1v1h-1zM23 27h1v1h-1zM24 26h1v1h-1zM24 27h1v1h-1zM25 26h1v1h-1zM25 27h1v1h-1zM26 26h1v1h-1zM26 27h1v1h-1zM27 26h1v1h-1zM27 27h1v1h-1zM30 26h1v1h-1zM31 26h1v1h-1zM32 26h1v1h-1zM33 26h1v1h-1zM33 27h1v1h-1zM34 26h1v1h-1zM34 27h1v1h-1zM35 26h1v1h-1zM35 27h1v1h-1zM36 26h1v1h-1zM36 27h1v1h-1zM37 26h1v1h-1zM37 27h1v1h-1zM38 26h1v1h-1zM38 27h1v1h-1zM40 26h1v1h-1zM40 27h1v1h-1zM41 26h1v1h-1zM41 27h1v1h-1zM42 26h1v1h-1zM42 27h1v1h-1zM43 26h1v1h-1zM43 27h1v1h-1zM44 26h1v1h-1zM44 27h1v1h-1zM45 26h1v1h-1zM45 27h1v1h-1zM47 26h1v1h-1zM47 27h1v1h-1zM48 26h1v1h-1zM48 27h1v1h-1zM49 26h1v1h-1zM49 27h1v1h-1zM50 26h1v1h-1zM50 27h1v1h-1zM51 26h1v1h-1zM51 27h1v1h-1zM52 26h1v1h-1zM52 27h1v1h-1zM54 26h1v1h-1zM54 27h1v1h-1zM55 26h1v1h-1zM55 27h1v1h-1zM56 26h1v1h-1zM56 27h1v1h-1zM57 26h1v1h-1zM57 27h1v1h-1zM58 26h1v1h-1zM58 27h1v1h-1zM59 26h1v1h-1zM59 27h1v1h-1zM61 26h1v1h-1zM61 27h1v1h-1zM62 26h1v1h-1zM62 27h1v1h-1zM63 26h1v1h-1zM63 27h1v1h-1zM64 26h1v1h-1zM64 27h1v1h-1zM66 26h1v1h-1zM66 27h1v1h-1zM67 26h1v1h-1zM67 27h1v1h-1zM68 26h1v1h-1zM68 27h1v1h-1zM69 26h1v1h-1zM69 27h1v1h-1zM70 26h1v1h-1zM70 27h1v1h-1zM71 26h1v1h-1zM71 27h1v1h-1z"/><path fill="#6a9955" fill-opacity="0.5" d="M16 26h1v1h-1zM19 27h1v1h-1zM29 27h1v1h-1zM32 27h1v1h-1z"/><path fill="#6a9955" fill-opacity="0.625" d="M16 27h1v1h-1zM20 27h1v1h-1zM30 27h1v1h-1zM31 27h1v1h-1z"/><path fill="#cccccc" fill-opacity="0.625" d="M11 36h1v1h-1zM11 37h1v1h-1zM15 37h1v1h-1zM16 37h1v1h-1z"/><path fill="#cccccc" fill-opacity="0.5" d="M12 37h1v1h-1zM14 37h1v1h-1zM15 36h1v1h-1zM17 37h1v1h-1z"/></svg>
</body></html>
